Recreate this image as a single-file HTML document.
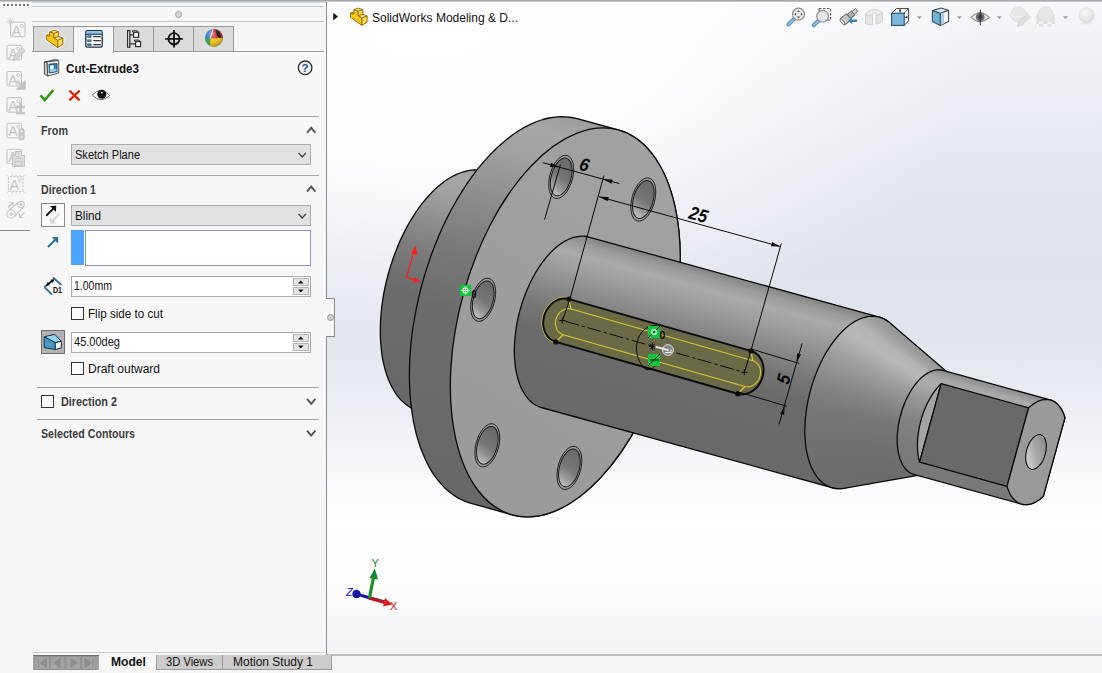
<!DOCTYPE html>
<html lang="en">
<head>
<meta charset="utf-8">
<title>Cut-Extrude3 - SolidWorks</title>
<style>
html,body{margin:0;padding:0;}
body{width:1102px;height:673px;overflow:hidden;background:#f7f7f7;position:relative;font-family:"Liberation Sans",sans-serif;font-size:12px;color:#111;}
.abs{position:absolute;}
.t{position:absolute;white-space:nowrap;line-height:14px;height:14px;}
.b{font-weight:bold;}
.hl{position:absolute;height:1px;background:#a9a9a9;}
.sec{color:#3c3c3c;font-weight:bold;}
.dd{position:absolute;left:71px;width:238px;height:19px;background:#e1e1e1;border:1px solid #adadad;}
.inp{position:absolute;left:71px;width:238px;height:19px;background:#fff;border:1px solid #ababab;}
.cb{position:absolute;width:11px;height:11px;border:1px solid #333;background:#fff;}
.spin{position:absolute;left:293px;width:14px;height:6px;background:#e4e4e4;border:1px solid #b4b4b4;}
.tab{position:absolute;top:26px;width:39px;height:24px;background:#dbdbdb;border:1px solid #9a9a9a;}
svg{position:absolute;left:0;top:0;}
</style>
</head>
<body>
<!-- viewport -->
<svg width="1102" height="673" viewBox="0 0 1102 673">
<defs>
<linearGradient id="bgv" x1="0" y1="0" x2="0" y2="1">
<stop offset="0" stop-color="#f6f7fa"/><stop offset="0.1" stop-color="#eef0f5"/><stop offset="0.25" stop-color="#e4e7ef"/><stop offset="0.4" stop-color="#dfe3ec"/><stop offset="0.5" stop-color="#e0e4ec"/><stop offset="0.6" stop-color="#e9ecf2"/><stop offset="0.72" stop-color="#f8f9fb"/><stop offset="0.8" stop-color="#ffffff"/><stop offset="0.9" stop-color="#fcfcfd"/><stop offset="1" stop-color="#f2f3f5"/>
</linearGradient>
<radialGradient id="bgr" cx="0" cy="0" r="1" gradientUnits="userSpaceOnUse" gradientTransform="translate(430 30) scale(560 330)">
<stop offset="0" stop-color="#fff" stop-opacity="1"/><stop offset="0.4" stop-color="#fff" stop-opacity="0.92"/><stop offset="1" stop-color="#fff" stop-opacity="0"/>
</radialGradient>
<linearGradient id="gB" gradientUnits="userSpaceOnUse" x1="485.0" y1="171.2" x2="418.9" y2="411.1"><stop offset="0.000" stop-color="#9c9c9c"/><stop offset="0.050" stop-color="#a6a6a6"/><stop offset="0.120" stop-color="#a2a2a2"/><stop offset="0.250" stop-color="#8e8e8e"/><stop offset="0.400" stop-color="#787878"/><stop offset="0.550" stop-color="#6c6c6c"/><stop offset="1.000" stop-color="#686868"/></linearGradient>
<linearGradient id="gF" gradientUnits="userSpaceOnUse" x1="577.3" y1="118.7" x2="471.3" y2="503.5"><stop offset="0.000" stop-color="#9c9c9c"/><stop offset="0.050" stop-color="#a6a6a6"/><stop offset="0.120" stop-color="#a2a2a2"/><stop offset="0.250" stop-color="#8e8e8e"/><stop offset="0.400" stop-color="#787878"/><stop offset="0.550" stop-color="#6c6c6c"/><stop offset="1.000" stop-color="#686868"/></linearGradient>
<linearGradient id="gFace" gradientUnits="userSpaceOnUse" x1="618.3" y1="130.0" x2="512.3" y2="514.8"><stop offset="0" stop-color="#a2a2a2"/><stop offset="1" stop-color="#9a9a9a"/></linearGradient>
<linearGradient id="gH" x1="0.6" y1="0" x2="0.4" y2="1"><stop offset="0" stop-color="#686868"/><stop offset="0.5" stop-color="#767676"/><stop offset="0.75" stop-color="#949494"/><stop offset="1" stop-color="#c4c4c4"/></linearGradient>
<linearGradient id="gS" gradientUnits="userSpaceOnUse" x1="588.8" y1="237.1" x2="541.8" y2="407.7"><stop offset="0.000" stop-color="#848484"/><stop offset="0.050" stop-color="#9c9c9c"/><stop offset="0.110" stop-color="#aaaaaa"/><stop offset="0.200" stop-color="#9e9e9e"/><stop offset="0.320" stop-color="#8a8a8a"/><stop offset="0.450" stop-color="#767676"/><stop offset="0.580" stop-color="#6b6b6b"/><stop offset="1.000" stop-color="#696969"/></linearGradient>
<linearGradient id="gC0" gradientUnits="userSpaceOnUse" x1="880.6" y1="318.2" x2="834.0" y2="487.5"><stop offset="0.000" stop-color="#989898"/><stop offset="0.060" stop-color="#b4b4b4"/><stop offset="0.120" stop-color="#b8b8b8"/><stop offset="0.250" stop-color="#a0a0a0"/><stop offset="0.420" stop-color="#888888"/><stop offset="0.600" stop-color="#767676"/><stop offset="1.000" stop-color="#6c6c6c"/></linearGradient>
<linearGradient id="gC1" gradientUnits="userSpaceOnUse" x1="883.2" y1="320.4" x2="837.4" y2="486.9"><stop offset="0.000" stop-color="#989898"/><stop offset="0.060" stop-color="#b4b4b4"/><stop offset="0.120" stop-color="#b8b8b8"/><stop offset="0.250" stop-color="#a0a0a0"/><stop offset="0.420" stop-color="#888888"/><stop offset="0.600" stop-color="#767676"/><stop offset="1.000" stop-color="#6c6c6c"/></linearGradient>
<linearGradient id="gC2" gradientUnits="userSpaceOnUse" x1="885.9" y1="322.6" x2="840.8" y2="486.3"><stop offset="0.000" stop-color="#989898"/><stop offset="0.060" stop-color="#b4b4b4"/><stop offset="0.120" stop-color="#b8b8b8"/><stop offset="0.250" stop-color="#a0a0a0"/><stop offset="0.420" stop-color="#888888"/><stop offset="0.600" stop-color="#767676"/><stop offset="1.000" stop-color="#6c6c6c"/></linearGradient>
<linearGradient id="gC3" gradientUnits="userSpaceOnUse" x1="888.5" y1="324.9" x2="844.2" y2="485.8"><stop offset="0.000" stop-color="#989898"/><stop offset="0.060" stop-color="#b4b4b4"/><stop offset="0.120" stop-color="#b8b8b8"/><stop offset="0.250" stop-color="#a0a0a0"/><stop offset="0.420" stop-color="#888888"/><stop offset="0.600" stop-color="#767676"/><stop offset="1.000" stop-color="#6c6c6c"/></linearGradient>
<linearGradient id="gC4" gradientUnits="userSpaceOnUse" x1="891.2" y1="327.1" x2="847.6" y2="485.2"><stop offset="0.000" stop-color="#989898"/><stop offset="0.060" stop-color="#b4b4b4"/><stop offset="0.120" stop-color="#b8b8b8"/><stop offset="0.250" stop-color="#a0a0a0"/><stop offset="0.420" stop-color="#888888"/><stop offset="0.600" stop-color="#767676"/><stop offset="1.000" stop-color="#6c6c6c"/></linearGradient>
<linearGradient id="gC5" gradientUnits="userSpaceOnUse" x1="893.8" y1="329.3" x2="851.0" y2="484.7"><stop offset="0.000" stop-color="#989898"/><stop offset="0.060" stop-color="#b4b4b4"/><stop offset="0.120" stop-color="#b8b8b8"/><stop offset="0.250" stop-color="#a0a0a0"/><stop offset="0.420" stop-color="#888888"/><stop offset="0.600" stop-color="#767676"/><stop offset="1.000" stop-color="#6c6c6c"/></linearGradient>
<linearGradient id="gC6" gradientUnits="userSpaceOnUse" x1="896.4" y1="331.5" x2="854.4" y2="484.1"><stop offset="0.000" stop-color="#989898"/><stop offset="0.060" stop-color="#b4b4b4"/><stop offset="0.120" stop-color="#b8b8b8"/><stop offset="0.250" stop-color="#a0a0a0"/><stop offset="0.420" stop-color="#888888"/><stop offset="0.600" stop-color="#767676"/><stop offset="1.000" stop-color="#6c6c6c"/></linearGradient>
<linearGradient id="gC7" gradientUnits="userSpaceOnUse" x1="899.1" y1="333.7" x2="857.8" y2="483.6"><stop offset="0.000" stop-color="#989898"/><stop offset="0.060" stop-color="#b4b4b4"/><stop offset="0.120" stop-color="#b8b8b8"/><stop offset="0.250" stop-color="#a0a0a0"/><stop offset="0.420" stop-color="#888888"/><stop offset="0.600" stop-color="#767676"/><stop offset="1.000" stop-color="#6c6c6c"/></linearGradient>
<linearGradient id="gC8" gradientUnits="userSpaceOnUse" x1="901.7" y1="335.9" x2="861.2" y2="483.0"><stop offset="0.000" stop-color="#989898"/><stop offset="0.060" stop-color="#b4b4b4"/><stop offset="0.120" stop-color="#b8b8b8"/><stop offset="0.250" stop-color="#a0a0a0"/><stop offset="0.420" stop-color="#888888"/><stop offset="0.600" stop-color="#767676"/><stop offset="1.000" stop-color="#6c6c6c"/></linearGradient>
<linearGradient id="gC9" gradientUnits="userSpaceOnUse" x1="904.4" y1="338.2" x2="864.6" y2="482.5"><stop offset="0.000" stop-color="#989898"/><stop offset="0.060" stop-color="#b4b4b4"/><stop offset="0.120" stop-color="#b8b8b8"/><stop offset="0.250" stop-color="#a0a0a0"/><stop offset="0.420" stop-color="#888888"/><stop offset="0.600" stop-color="#767676"/><stop offset="1.000" stop-color="#6c6c6c"/></linearGradient>
<linearGradient id="gC10" gradientUnits="userSpaceOnUse" x1="907.0" y1="340.4" x2="868.0" y2="481.9"><stop offset="0.000" stop-color="#989898"/><stop offset="0.060" stop-color="#b4b4b4"/><stop offset="0.120" stop-color="#b8b8b8"/><stop offset="0.250" stop-color="#a0a0a0"/><stop offset="0.420" stop-color="#888888"/><stop offset="0.600" stop-color="#767676"/><stop offset="1.000" stop-color="#6c6c6c"/></linearGradient>
<linearGradient id="gC11" gradientUnits="userSpaceOnUse" x1="909.6" y1="342.6" x2="871.4" y2="481.4"><stop offset="0.000" stop-color="#989898"/><stop offset="0.060" stop-color="#b4b4b4"/><stop offset="0.120" stop-color="#b8b8b8"/><stop offset="0.250" stop-color="#a0a0a0"/><stop offset="0.420" stop-color="#888888"/><stop offset="0.600" stop-color="#767676"/><stop offset="1.000" stop-color="#6c6c6c"/></linearGradient>
<linearGradient id="gC12" gradientUnits="userSpaceOnUse" x1="912.3" y1="344.8" x2="874.8" y2="480.8"><stop offset="0.000" stop-color="#989898"/><stop offset="0.060" stop-color="#b4b4b4"/><stop offset="0.120" stop-color="#b8b8b8"/><stop offset="0.250" stop-color="#a0a0a0"/><stop offset="0.420" stop-color="#888888"/><stop offset="0.600" stop-color="#767676"/><stop offset="1.000" stop-color="#6c6c6c"/></linearGradient>
<linearGradient id="gC13" gradientUnits="userSpaceOnUse" x1="914.9" y1="347.0" x2="878.2" y2="480.3"><stop offset="0.000" stop-color="#989898"/><stop offset="0.060" stop-color="#b4b4b4"/><stop offset="0.120" stop-color="#b8b8b8"/><stop offset="0.250" stop-color="#a0a0a0"/><stop offset="0.420" stop-color="#888888"/><stop offset="0.600" stop-color="#767676"/><stop offset="1.000" stop-color="#6c6c6c"/></linearGradient>
<linearGradient id="gC14" gradientUnits="userSpaceOnUse" x1="917.6" y1="349.3" x2="881.6" y2="479.7"><stop offset="0.000" stop-color="#989898"/><stop offset="0.060" stop-color="#b4b4b4"/><stop offset="0.120" stop-color="#b8b8b8"/><stop offset="0.250" stop-color="#a0a0a0"/><stop offset="0.420" stop-color="#888888"/><stop offset="0.600" stop-color="#767676"/><stop offset="1.000" stop-color="#6c6c6c"/></linearGradient>
<linearGradient id="gC15" gradientUnits="userSpaceOnUse" x1="920.2" y1="351.5" x2="885.0" y2="479.2"><stop offset="0.000" stop-color="#989898"/><stop offset="0.060" stop-color="#b4b4b4"/><stop offset="0.120" stop-color="#b8b8b8"/><stop offset="0.250" stop-color="#a0a0a0"/><stop offset="0.420" stop-color="#888888"/><stop offset="0.600" stop-color="#767676"/><stop offset="1.000" stop-color="#6c6c6c"/></linearGradient>
<linearGradient id="gC16" gradientUnits="userSpaceOnUse" x1="922.8" y1="353.7" x2="888.4" y2="478.6"><stop offset="0.000" stop-color="#989898"/><stop offset="0.060" stop-color="#b4b4b4"/><stop offset="0.120" stop-color="#b8b8b8"/><stop offset="0.250" stop-color="#a0a0a0"/><stop offset="0.420" stop-color="#888888"/><stop offset="0.600" stop-color="#767676"/><stop offset="1.000" stop-color="#6c6c6c"/></linearGradient>
<linearGradient id="gC17" gradientUnits="userSpaceOnUse" x1="925.5" y1="355.9" x2="891.8" y2="478.0"><stop offset="0.000" stop-color="#989898"/><stop offset="0.060" stop-color="#b4b4b4"/><stop offset="0.120" stop-color="#b8b8b8"/><stop offset="0.250" stop-color="#a0a0a0"/><stop offset="0.420" stop-color="#888888"/><stop offset="0.600" stop-color="#767676"/><stop offset="1.000" stop-color="#6c6c6c"/></linearGradient>
<linearGradient id="gC18" gradientUnits="userSpaceOnUse" x1="928.1" y1="358.1" x2="895.2" y2="477.5"><stop offset="0.000" stop-color="#989898"/><stop offset="0.060" stop-color="#b4b4b4"/><stop offset="0.120" stop-color="#b8b8b8"/><stop offset="0.250" stop-color="#a0a0a0"/><stop offset="0.420" stop-color="#888888"/><stop offset="0.600" stop-color="#767676"/><stop offset="1.000" stop-color="#6c6c6c"/></linearGradient>
<linearGradient id="gC19" gradientUnits="userSpaceOnUse" x1="930.7" y1="360.3" x2="898.6" y2="476.9"><stop offset="0.000" stop-color="#989898"/><stop offset="0.060" stop-color="#b4b4b4"/><stop offset="0.120" stop-color="#b8b8b8"/><stop offset="0.250" stop-color="#a0a0a0"/><stop offset="0.420" stop-color="#888888"/><stop offset="0.600" stop-color="#767676"/><stop offset="1.000" stop-color="#6c6c6c"/></linearGradient>
<linearGradient id="gC20" gradientUnits="userSpaceOnUse" x1="933.4" y1="362.6" x2="902.0" y2="476.4"><stop offset="0.000" stop-color="#989898"/><stop offset="0.060" stop-color="#b4b4b4"/><stop offset="0.120" stop-color="#b8b8b8"/><stop offset="0.250" stop-color="#a0a0a0"/><stop offset="0.420" stop-color="#888888"/><stop offset="0.600" stop-color="#767676"/><stop offset="1.000" stop-color="#6c6c6c"/></linearGradient>
<linearGradient id="gC21" gradientUnits="userSpaceOnUse" x1="936.0" y1="364.8" x2="905.4" y2="475.8"><stop offset="0.000" stop-color="#989898"/><stop offset="0.060" stop-color="#b4b4b4"/><stop offset="0.120" stop-color="#b8b8b8"/><stop offset="0.250" stop-color="#a0a0a0"/><stop offset="0.420" stop-color="#888888"/><stop offset="0.600" stop-color="#767676"/><stop offset="1.000" stop-color="#6c6c6c"/></linearGradient>
<linearGradient id="gC22" gradientUnits="userSpaceOnUse" x1="938.7" y1="367.0" x2="908.8" y2="475.3"><stop offset="0.000" stop-color="#989898"/><stop offset="0.060" stop-color="#b4b4b4"/><stop offset="0.120" stop-color="#b8b8b8"/><stop offset="0.250" stop-color="#a0a0a0"/><stop offset="0.420" stop-color="#888888"/><stop offset="0.600" stop-color="#767676"/><stop offset="1.000" stop-color="#6c6c6c"/></linearGradient>
<linearGradient id="gC23" gradientUnits="userSpaceOnUse" x1="941.3" y1="369.2" x2="912.2" y2="474.7"><stop offset="0.000" stop-color="#989898"/><stop offset="0.060" stop-color="#b4b4b4"/><stop offset="0.120" stop-color="#b8b8b8"/><stop offset="0.250" stop-color="#a0a0a0"/><stop offset="0.420" stop-color="#888888"/><stop offset="0.600" stop-color="#767676"/><stop offset="1.000" stop-color="#6c6c6c"/></linearGradient>
<linearGradient id="gM" gradientUnits="userSpaceOnUse" x1="942.6" y1="370.3" x2="913.9" y2="474.4"><stop offset="0.000" stop-color="#8c8c8c"/><stop offset="0.080" stop-color="#a8a8a8"/><stop offset="0.160" stop-color="#acacac"/><stop offset="0.300" stop-color="#989898"/><stop offset="0.500" stop-color="#848484"/><stop offset="0.700" stop-color="#7c7c7c"/><stop offset="1.000" stop-color="#787878"/></linearGradient>
<linearGradient id="gEH" x1="0.9" y1="0.1" x2="0.1" y2="0.9"><stop offset="0" stop-color="#8a8a8a"/><stop offset="0.5" stop-color="#a8a8a8"/><stop offset="1" stop-color="#d8d8d8"/></linearGradient>
</defs>
<rect x="327" y="2" width="775" height="653" fill="url(#bgv)"/>
<rect x="327" y="2" width="775" height="653" fill="url(#bgr)"/>
<path d="M380.3 332.0 L380.4 325.9 L380.6 319.7 L381.1 313.5 L381.7 307.2 L382.6 300.8 L383.6 294.4 L384.9 288.0 L386.3 281.6 L387.9 275.2 L389.7 268.9 L391.7 262.7 L393.8 256.5 L396.1 250.4 L398.5 244.4 L401.1 238.6 L403.9 232.9 L406.7 227.4 L409.7 222.0 L412.9 216.9 L416.1 211.9 L419.4 207.2 L422.8 202.7 L426.3 198.5 L429.9 194.5 L433.5 190.7 L437.2 187.3 L440.9 184.2 L444.7 181.3 L448.4 178.7 L452.2 176.5 L456.0 174.6 L459.8 173.0 L463.5 171.8 L467.2 170.8 L470.9 170.2 L474.5 170.0 L478.1 170.1 L481.6 170.5 L485.0 171.2 L557.4 191.2 L560.7 192.3 L563.9 193.7 L567.0 195.4 L570.0 197.5 L572.8 199.9 L575.5 202.6 L578.1 205.6 L580.5 208.9 L582.8 212.5 L584.9 216.3 L586.8 220.5 L588.6 224.8 L590.2 229.4 L591.6 234.3 L592.8 239.3 L593.8 244.6 L594.6 250.0 L595.3 255.6 L595.7 261.4 L595.9 267.3 L596.0 273.3 L595.8 279.5 L595.4 285.7 L594.9 292.0 L594.1 298.3 L593.1 304.7 L592.0 311.1 L590.7 317.5 L589.1 323.9 L587.4 330.2 L585.6 336.5 L583.5 342.7 L581.3 348.8 L578.9 354.9 L576.4 360.8 L573.8 366.5 L571.0 372.2 L568.0 377.6 L565.0 382.9 L561.8 387.9 L558.5 392.7 L555.1 397.4 L551.7 401.7 L548.2 405.9 L544.6 409.7 L540.9 413.3 L537.2 416.6 L533.5 419.6 L529.7 422.3 L525.9 424.7 L522.1 426.8 L518.4 428.5 L514.6 429.9 L510.9 431.0 L507.2 431.8 L503.5 432.2 L499.9 432.3 L496.4 432.1 L493.0 431.5 L417.2 410.6 L414.0 409.3 L410.8 407.8 L407.8 405.8 L404.9 403.6 L402.1 401.1 L399.4 398.2 L396.9 395.1 L394.6 391.6 L392.4 387.9 L390.4 383.9 L388.5 379.7 L386.9 375.2 L385.4 370.5 L384.1 365.5 L382.9 360.4 L382.0 355.0 L381.3 349.5 L380.8 343.8 L380.4 337.9 Z" fill="url(#gB)" stroke="#0a0a0a" stroke-width="1.3" stroke-linejoin="round" stroke-linecap="round"/>
<path d="M409.4 376.6 L409.5 366.8 L409.9 356.9 L410.7 346.9 L411.7 336.8 L413.1 326.5 L414.8 316.3 L416.8 306.0 L419.1 295.8 L421.6 285.6 L424.5 275.4 L427.7 265.4 L431.1 255.5 L434.8 245.7 L438.7 236.1 L442.8 226.8 L447.2 217.6 L451.8 208.8 L456.7 200.2 L461.7 191.9 L466.8 184.0 L472.2 176.4 L477.6 169.2 L483.2 162.4 L489.0 155.9 L494.8 150.0 L500.7 144.5 L506.7 139.4 L512.7 134.8 L518.7 130.7 L524.8 127.1 L530.9 124.1 L536.9 121.5 L542.9 119.5 L548.9 118.0 L554.8 117.1 L560.6 116.7 L566.3 116.8 L571.9 117.5 L577.3 118.7 L618.3 130.0 L623.6 131.7 L628.8 134.0 L633.7 136.8 L638.5 140.1 L643.1 144.0 L647.4 148.3 L651.6 153.1 L655.5 158.4 L659.1 164.1 L662.5 170.3 L665.6 176.9 L668.4 183.9 L670.9 191.3 L673.2 199.1 L675.1 207.2 L676.8 215.7 L678.1 224.4 L679.1 233.4 L679.8 242.6 L680.2 252.1 L680.2 261.8 L680.0 271.6 L679.4 281.6 L678.5 291.7 L677.3 301.9 L675.7 312.1 L673.9 322.4 L671.7 332.6 L669.3 342.9 L666.6 353.0 L663.6 363.1 L660.3 373.1 L656.7 382.9 L652.9 392.6 L648.9 402.1 L644.6 411.3 L640.1 420.3 L635.4 429.1 L630.5 437.5 L625.4 445.6 L620.2 453.4 L614.7 460.8 L609.2 467.8 L603.5 474.4 L597.8 480.6 L591.9 486.4 L586.0 491.6 L580.0 496.5 L573.9 500.8 L567.9 504.6 L561.8 508.0 L555.7 510.8 L549.7 513.1 L543.7 514.8 L537.8 516.0 L531.9 516.7 L526.2 516.9 L520.5 516.5 L515.0 515.5 L509.6 514.0 L468.6 502.7 L463.4 500.7 L458.4 498.2 L453.5 495.1 L448.8 491.5 L444.3 487.4 L440.1 482.9 L436.1 477.8 L432.3 472.3 L428.8 466.3 L425.6 459.9 L422.6 453.1 L419.9 445.9 L417.5 438.3 L415.4 430.4 L413.6 422.1 L412.2 413.5 L411.0 404.7 L410.1 395.5 L409.6 386.2 Z" fill="url(#gF)" stroke="#0a0a0a" stroke-width="1.3" stroke-linejoin="round" stroke-linecap="round"/>
<ellipse cx="565.3" cy="322.4" rx="105.8" ry="199.6" transform="rotate(15.4 565.3 322.4)" fill="url(#gFace)" stroke="#0a0a0a" stroke-width="1.3" stroke-linejoin="round" stroke-linecap="round"/>
<g transform="rotate(15.4 483.2 299.8)"><ellipse cx="483.2" cy="299.8" rx="11.4" ry="22.2" fill="none" stroke="#1a1a1a" stroke-width="0.9"/><ellipse cx="483.2" cy="299.8" rx="9.9" ry="19.4" fill="url(#gH)" stroke="#1a1a1a" stroke-width="1"/></g>
<g transform="rotate(15.4 643.3 199.5)"><ellipse cx="643.3" cy="199.5" rx="11.4" ry="22.2" fill="none" stroke="#1a1a1a" stroke-width="0.9"/><ellipse cx="643.3" cy="199.5" rx="9.9" ry="19.4" fill="url(#gH)" stroke="#1a1a1a" stroke-width="1"/></g>
<g transform="rotate(15.4 561.2 176.9)"><ellipse cx="561.2" cy="176.9" rx="11.4" ry="22.2" fill="none" stroke="#1a1a1a" stroke-width="0.9"/><ellipse cx="561.2" cy="176.9" rx="9.9" ry="19.4" fill="url(#gH)" stroke="#1a1a1a" stroke-width="1"/></g>
<g transform="rotate(15.4 487.3 445.3)"><ellipse cx="487.3" cy="445.3" rx="11.4" ry="22.2" fill="none" stroke="#1a1a1a" stroke-width="0.9"/><ellipse cx="487.3" cy="445.3" rx="9.9" ry="19.4" fill="url(#gH)" stroke="#1a1a1a" stroke-width="1"/></g>
<g transform="rotate(15.4 569.4 467.9)"><ellipse cx="569.4" cy="467.9" rx="11.4" ry="22.2" fill="none" stroke="#1a1a1a" stroke-width="0.9"/><ellipse cx="569.4" cy="467.9" rx="9.9" ry="19.4" fill="url(#gH)" stroke="#1a1a1a" stroke-width="1"/></g>
<path d="M514.3 351.4 L514.4 347.1 L514.6 342.7 L514.9 338.3 L515.4 333.8 L516.0 329.2 L516.7 324.7 L517.6 320.1 L518.6 315.6 L519.8 311.1 L521.0 306.6 L522.4 302.1 L524.0 297.7 L525.6 293.4 L527.3 289.2 L529.2 285.0 L531.1 281.0 L533.2 277.0 L535.3 273.2 L537.5 269.5 L539.8 266.0 L542.2 262.7 L544.6 259.5 L547.1 256.4 L549.6 253.6 L552.2 251.0 L554.8 248.5 L557.5 246.3 L560.1 244.2 L562.8 242.4 L565.5 240.8 L568.2 239.5 L570.9 238.3 L573.5 237.4 L576.2 236.8 L578.8 236.4 L581.4 236.2 L583.9 236.2 L586.4 236.5 L588.8 237.1 L879.3 317.1 L881.6 317.9 L883.9 318.9 L886.1 320.1 L888.2 321.6 L890.3 323.3 L892.2 325.2 L894.0 327.4 L895.8 329.7 L897.4 332.2 L898.9 335.0 L900.2 337.9 L901.5 341.0 L902.6 344.3 L903.6 347.8 L904.5 351.3 L905.2 355.1 L905.8 359.0 L906.2 362.9 L906.5 367.0 L906.7 371.2 L906.7 375.5 L906.6 379.9 L906.4 384.3 L906.0 388.8 L905.4 393.3 L904.7 397.8 L903.9 402.4 L903.0 406.9 L901.9 411.5 L900.7 416.0 L899.4 420.5 L897.9 424.9 L896.3 429.3 L894.6 433.5 L892.8 437.7 L890.9 441.8 L889.0 445.8 L886.9 449.7 L884.7 453.4 L882.4 457.0 L880.1 460.5 L877.7 463.8 L875.2 466.9 L872.7 469.8 L870.2 472.6 L867.6 475.1 L864.9 477.5 L862.3 479.6 L859.6 481.5 L856.9 483.2 L854.2 484.7 L851.5 485.9 L848.9 486.9 L846.2 487.7 L843.6 488.3 L841.0 488.6 L838.4 488.6 L835.9 488.5 L833.5 488.0 L543.0 408.0 L540.6 407.4 L538.3 406.5 L536.1 405.3 L533.9 404.0 L531.8 402.4 L529.8 400.6 L528.0 398.6 L526.2 396.3 L524.5 393.9 L523.0 391.2 L521.5 388.4 L520.2 385.4 L519.0 382.2 L517.9 378.8 L517.0 375.3 L516.2 371.6 L515.6 367.8 L515.0 363.9 L514.7 359.8 L514.4 355.7 Z" fill="url(#gS)" stroke="#0a0a0a" stroke-width="1.3" stroke-linejoin="round" stroke-linecap="round"/>
<path d="M804.9 434.3 L805.0 423.6 L806.0 412.5 L807.9 401.2 L810.6 390.0 L814.0 378.9 L818.2 368.3 L823.0 358.3 L828.4 349.0 L834.2 340.6 L840.4 333.3 L846.9 327.1 L853.5 322.3 L860.2 318.8 L866.8 316.8 L873.2 316.2 L879.3 317.1 L885.0 319.4 L890.2 323.2 L892.6 325.3 L897.2 330.4 L901.1 336.7 L904.2 344.1 L906.6 352.6 L908.2 361.9 L908.9 371.9 L908.8 382.4 L907.8 393.4 L905.9 404.4 L903.3 415.5 L899.9 426.3 L895.8 436.8 L891.1 446.7 L885.8 455.8 L880.0 464.1 L873.9 471.3 L867.5 477.3 L861.0 482.1 L854.5 485.5 L848.0 487.5 L844.8 488.1 L838.4 488.6 L832.3 487.7 L826.6 485.4 L821.4 481.6 L816.8 476.5 L812.8 470.1 L809.6 462.5 L807.2 453.9 L805.6 444.5 Z" fill="url(#gC0)"/>
<path d="M808.7 434.6 L808.9 424.0 L809.8 413.1 L811.7 402.1 L814.3 391.0 L817.7 380.1 L821.8 369.7 L826.5 359.8 L831.8 350.7 L837.6 342.4 L843.7 335.2 L850.1 329.2 L856.6 324.4 L863.1 321.0 L869.6 319.0 L875.9 318.4 L881.9 319.3 L887.5 321.6 L892.6 325.3 L895.1 327.5 L899.6 332.4 L903.4 338.6 L906.5 345.9 L908.8 354.2 L910.4 363.4 L911.1 373.2 L910.9 383.6 L910.0 394.4 L908.2 405.2 L905.6 416.1 L902.2 426.8 L898.2 437.1 L893.5 446.8 L888.3 455.8 L882.7 463.9 L876.7 471.0 L870.4 476.9 L864.0 481.6 L857.6 485.0 L851.2 486.9 L848.0 487.5 L841.7 488.1 L835.7 487.2 L830.1 484.9 L825.0 481.1 L820.4 476.1 L816.5 469.8 L813.4 462.4 L811.0 453.9 L809.4 444.6 Z" fill="url(#gC1)"/>
<path d="M812.6 434.9 L812.7 424.5 L813.7 413.8 L815.5 402.9 L818.1 392.0 L821.4 381.4 L825.4 371.1 L830.1 361.4 L835.3 352.4 L841.0 344.3 L847.0 337.2 L853.2 331.2 L859.6 326.6 L866.1 323.2 L872.5 321.2 L878.7 320.7 L884.6 321.5 L890.1 323.8 L895.1 327.5 L897.6 329.6 L902.0 334.5 L905.7 340.5 L908.8 347.7 L911.1 355.9 L912.6 364.9 L913.3 374.6 L913.1 384.8 L912.2 395.3 L910.4 406.1 L907.9 416.8 L904.6 427.2 L900.6 437.4 L896.0 446.9 L890.9 455.8 L885.4 463.7 L879.5 470.7 L873.3 476.5 L867.0 481.1 L860.7 484.4 L854.4 486.4 L851.2 486.9 L845.0 487.5 L839.1 486.6 L833.6 484.3 L828.5 480.7 L824.1 475.7 L820.3 469.5 L817.1 462.2 L814.8 453.9 L813.3 444.8 Z" fill="url(#gC2)"/>
<path d="M816.4 435.2 L816.5 425.0 L817.5 414.5 L819.3 403.8 L821.8 393.1 L825.1 382.6 L829.1 372.5 L833.7 362.9 L838.8 354.1 L844.3 346.1 L850.2 339.1 L856.4 333.3 L862.7 328.7 L869.0 325.4 L875.3 323.4 L881.4 322.9 L887.2 323.7 L892.6 326.0 L897.6 329.6 L900.0 331.7 L904.3 336.5 L908.0 342.5 L911.0 349.5 L913.3 357.6 L914.8 366.4 L915.5 375.9 L915.3 386.0 L914.4 396.3 L912.7 406.9 L910.1 417.4 L906.9 427.7 L903.0 437.6 L898.5 447.0 L893.5 455.7 L888.0 463.5 L882.2 470.4 L876.2 476.1 L870.0 480.7 L863.7 483.9 L857.6 485.8 L854.4 486.4 L848.3 486.9 L842.5 486.1 L837.1 483.8 L832.1 480.2 L827.7 475.4 L824.0 469.3 L820.9 462.1 L818.6 453.9 L817.1 444.9 Z" fill="url(#gC3)"/>
<path d="M820.3 435.5 L820.4 425.5 L821.3 415.1 L823.1 404.6 L825.6 394.1 L828.8 383.8 L832.7 373.8 L837.2 364.4 L842.2 355.8 L847.7 347.9 L853.5 341.1 L859.6 335.4 L865.8 330.8 L872.0 327.6 L878.1 325.7 L884.1 325.1 L889.8 326.0 L895.2 328.2 L900.0 331.7 L902.5 333.8 L906.7 338.5 L910.4 344.4 L913.3 351.3 L915.5 359.2 L917.0 367.9 L917.7 377.3 L917.5 387.1 L916.6 397.3 L914.9 407.7 L912.4 418.0 L909.3 428.2 L905.4 437.9 L901.0 447.1 L896.1 455.7 L890.7 463.4 L885.0 470.1 L879.0 475.7 L873.0 480.2 L866.8 483.4 L860.8 485.3 L857.6 485.8 L851.6 486.4 L845.9 485.5 L840.6 483.3 L835.7 479.8 L831.4 475.0 L827.7 469.0 L824.7 461.9 L822.4 453.9 L820.9 445.1 Z" fill="url(#gC4)"/>
<path d="M824.1 435.9 L824.2 426.0 L825.2 415.8 L826.9 405.5 L829.3 395.1 L832.5 385.0 L836.3 375.2 L840.8 366.0 L845.7 357.5 L851.1 349.8 L856.8 343.0 L862.7 337.4 L868.8 333.0 L874.9 329.8 L881.0 327.9 L886.9 327.4 L892.5 328.2 L897.7 330.3 L902.5 333.8 L905.0 335.9 L909.1 340.6 L912.7 346.3 L915.6 353.2 L917.8 360.9 L919.2 369.4 L919.9 378.6 L919.7 388.3 L918.8 398.3 L917.1 408.5 L914.7 418.6 L911.6 428.6 L907.8 438.2 L903.5 447.3 L898.6 455.6 L893.4 463.2 L887.8 469.8 L881.9 475.3 L875.9 479.7 L869.9 482.9 L864.0 484.7 L860.8 485.3 L854.9 485.8 L849.3 485.0 L844.1 482.8 L839.3 479.3 L835.0 474.6 L831.4 468.7 L828.5 461.8 L826.2 453.9 L824.8 445.2 Z" fill="url(#gC5)"/>
<path d="M828.0 436.2 L828.1 426.5 L829.0 416.5 L830.7 406.3 L833.1 396.2 L836.2 386.2 L840.0 376.6 L844.3 367.5 L849.2 359.2 L854.4 351.6 L860.0 345.0 L865.9 339.5 L871.9 335.1 L877.9 332.0 L883.8 330.1 L889.6 329.6 L895.1 330.4 L900.3 332.5 L905.0 335.9 L907.4 338.0 L911.5 342.6 L915.0 348.3 L917.9 355.0 L920.0 362.6 L921.4 371.0 L922.1 380.0 L921.9 389.5 L921.0 399.3 L919.4 409.3 L917.0 419.3 L913.9 429.1 L910.2 438.5 L906.0 447.4 L901.2 455.6 L896.0 463.0 L890.5 469.5 L884.8 475.0 L878.9 479.2 L873.0 482.3 L867.2 484.1 L864.0 484.7 L858.2 485.2 L852.7 484.4 L847.5 482.3 L842.9 478.9 L838.7 474.2 L835.1 468.5 L832.2 461.7 L830.0 453.9 L828.6 445.4 Z" fill="url(#gC6)"/>
<path d="M831.8 436.5 L831.9 427.0 L832.8 417.1 L834.5 407.2 L836.8 397.2 L839.9 387.4 L843.6 378.0 L847.9 369.1 L852.6 360.9 L857.8 353.4 L863.3 347.0 L869.1 341.5 L874.9 337.2 L880.8 334.1 L886.7 332.3 L892.3 331.8 L897.8 332.6 L902.8 334.7 L907.4 338.0 L909.9 340.2 L913.9 344.6 L917.3 350.2 L920.1 356.8 L922.2 364.2 L923.6 372.5 L924.2 381.3 L924.1 390.7 L923.2 400.3 L921.6 410.1 L919.3 419.9 L916.3 429.5 L912.7 438.8 L908.5 447.5 L903.8 455.6 L898.7 462.9 L893.3 469.2 L887.7 474.6 L881.9 478.8 L876.1 481.8 L870.4 483.6 L867.2 484.1 L861.5 484.7 L856.1 483.9 L851.0 481.8 L846.4 478.4 L842.3 473.9 L838.8 468.2 L836.0 461.5 L833.9 453.9 L832.5 445.5 Z" fill="url(#gC7)"/>
<path d="M835.7 436.8 L835.8 427.5 L836.7 417.8 L838.3 408.0 L840.6 398.2 L843.6 388.6 L847.2 379.4 L851.4 370.6 L856.1 362.6 L861.2 355.3 L866.6 348.9 L872.2 343.6 L878.0 339.4 L883.8 336.3 L889.5 334.6 L895.1 334.1 L900.4 334.8 L905.4 336.9 L909.9 340.2 L912.3 342.3 L916.3 346.7 L919.7 352.1 L922.4 358.6 L924.5 365.9 L925.8 374.0 L926.4 382.7 L926.3 391.8 L925.5 401.3 L923.9 410.9 L921.6 420.5 L918.6 430.0 L915.1 439.0 L911.0 447.6 L906.4 455.5 L901.4 462.7 L896.1 468.9 L890.6 474.2 L884.9 478.3 L879.2 481.3 L873.6 483.0 L870.4 483.6 L864.8 484.1 L859.5 483.3 L854.5 481.3 L850.0 478.0 L846.0 473.5 L842.6 467.9 L839.8 461.4 L837.7 453.9 L836.3 445.7 Z" fill="url(#gC8)"/>
<path d="M839.5 437.1 L839.6 428.0 L840.5 418.5 L842.1 408.9 L844.4 399.3 L847.3 389.8 L850.9 380.8 L855.0 372.2 L859.6 364.3 L864.6 357.1 L869.9 350.9 L875.4 345.6 L881.0 341.5 L886.7 338.5 L892.4 336.8 L897.8 336.3 L903.0 337.1 L907.9 339.1 L912.3 342.3 L914.8 344.4 L918.7 348.7 L922.0 354.1 L924.7 360.4 L926.7 367.6 L928.0 375.5 L928.6 384.0 L928.5 393.0 L927.7 402.3 L926.1 411.7 L923.9 421.2 L921.0 430.4 L917.5 439.3 L913.5 447.7 L908.9 455.5 L904.1 462.5 L898.9 468.6 L893.4 473.8 L887.9 477.8 L882.3 480.7 L876.8 482.5 L873.6 483.0 L868.1 483.5 L862.9 482.8 L858.0 480.7 L853.6 477.5 L849.7 473.1 L846.3 467.7 L843.5 461.2 L841.5 453.9 L840.1 445.8 Z" fill="url(#gC9)"/>
<path d="M843.3 437.4 L843.5 428.4 L844.3 419.2 L845.9 409.7 L848.1 400.3 L851.0 391.1 L854.5 382.2 L858.5 373.7 L863.0 366.0 L867.9 359.0 L873.1 352.8 L878.5 347.7 L884.1 343.6 L889.7 340.7 L895.2 339.0 L900.6 338.5 L905.7 339.3 L910.5 341.2 L914.8 344.4 L917.3 346.5 L921.1 350.7 L924.3 356.0 L926.9 362.2 L928.9 369.2 L930.2 377.0 L930.8 385.4 L930.7 394.2 L929.9 403.3 L928.4 412.6 L926.2 421.8 L923.3 430.9 L919.9 439.6 L915.9 447.8 L911.5 455.5 L906.7 462.3 L901.6 468.4 L896.3 473.4 L890.9 477.4 L885.4 480.2 L880.0 481.9 L876.8 482.5 L871.4 482.9 L866.3 482.2 L861.5 480.2 L857.2 477.1 L853.3 472.8 L850.0 467.4 L847.3 461.1 L845.3 453.9 L844.0 446.0 Z" fill="url(#gC10)"/>
<path d="M847.2 437.7 L847.3 428.9 L848.1 419.8 L849.7 410.6 L851.9 401.3 L854.7 392.3 L858.1 383.5 L862.1 375.3 L866.5 367.7 L871.3 360.8 L876.4 354.8 L881.7 349.7 L887.2 345.8 L892.6 342.9 L898.0 341.2 L903.3 340.8 L908.3 341.5 L913.0 343.4 L917.3 346.5 L919.7 348.6 L923.4 352.8 L926.6 357.9 L929.2 364.0 L931.2 370.9 L932.4 378.5 L933.0 386.7 L932.9 395.4 L932.1 404.3 L930.6 413.4 L928.4 422.4 L925.7 431.3 L922.3 439.9 L918.4 447.9 L914.1 455.4 L909.4 462.2 L904.4 468.1 L899.2 473.0 L893.8 476.9 L888.5 479.7 L883.2 481.3 L880.0 481.9 L874.7 482.4 L869.7 481.6 L865.0 479.7 L860.8 476.6 L857.0 472.4 L853.7 467.1 L851.1 460.9 L849.1 453.9 L847.8 446.1 Z" fill="url(#gC11)"/>
<path d="M851.0 438.1 L851.2 429.4 L852.0 420.5 L853.5 411.4 L855.6 402.4 L858.4 393.5 L861.8 384.9 L865.6 376.8 L870.0 369.4 L874.7 362.6 L879.7 356.7 L884.9 351.8 L890.2 347.9 L895.6 345.1 L900.9 343.4 L906.0 343.0 L911.0 343.7 L915.5 345.6 L919.7 348.6 L922.2 350.8 L925.8 354.8 L928.9 359.9 L931.5 365.8 L933.4 372.6 L934.6 380.1 L935.2 388.1 L935.1 396.6 L934.3 405.3 L932.8 414.2 L930.7 423.1 L928.0 431.8 L924.7 440.1 L920.9 448.1 L916.7 455.4 L912.1 462.0 L907.2 467.8 L902.1 472.6 L896.8 476.4 L891.6 479.2 L886.4 480.8 L883.2 481.3 L878.0 481.8 L873.1 481.1 L868.5 479.2 L864.3 476.2 L860.6 472.0 L857.4 466.9 L854.9 460.8 L852.9 453.9 L851.6 446.3 Z" fill="url(#gC12)"/>
<path d="M854.9 438.4 L855.0 429.9 L855.8 421.2 L857.3 412.3 L859.4 403.4 L862.1 394.7 L865.4 386.3 L869.2 378.4 L873.4 371.1 L878.0 364.5 L882.9 358.7 L888.0 353.9 L893.3 350.0 L898.5 347.3 L903.7 345.7 L908.8 345.2 L913.6 345.9 L918.1 347.8 L922.2 350.8 L924.7 352.9 L928.2 356.8 L931.3 361.8 L933.7 367.6 L935.6 374.3 L936.8 381.6 L937.4 389.4 L937.3 397.7 L936.5 406.3 L935.1 415.0 L933.0 423.7 L930.3 432.2 L927.1 440.4 L923.4 448.2 L919.3 455.4 L914.7 461.8 L909.9 467.5 L904.9 472.2 L899.8 476.0 L894.7 478.6 L889.6 480.2 L886.4 480.8 L881.3 481.2 L876.5 480.5 L872.0 478.7 L867.9 475.7 L864.3 471.7 L861.2 466.6 L858.6 460.6 L856.7 453.9 L855.5 446.4 Z" fill="url(#gC13)"/>
<path d="M858.7 438.7 L858.8 430.4 L859.6 421.8 L861.1 413.1 L863.1 404.4 L865.8 395.9 L869.0 387.7 L872.7 379.9 L876.9 372.8 L881.4 366.3 L886.2 360.6 L891.2 355.9 L896.3 352.2 L901.5 349.5 L906.6 347.9 L911.5 347.4 L916.2 348.1 L920.6 350.0 L924.7 352.9 L927.1 355.0 L930.6 358.9 L933.6 363.7 L936.0 369.4 L937.8 375.9 L939.1 383.1 L939.6 390.8 L939.5 398.9 L938.7 407.3 L937.3 415.8 L935.3 424.3 L932.7 432.7 L929.5 440.7 L925.9 448.3 L921.8 455.3 L917.4 461.7 L912.7 467.2 L907.8 471.8 L902.8 475.5 L897.8 478.1 L892.8 479.7 L889.6 480.2 L884.6 480.7 L879.9 480.0 L875.5 478.2 L871.5 475.2 L867.9 471.3 L864.9 466.3 L862.4 460.5 L860.5 453.9 L859.3 446.6 Z" fill="url(#gC14)"/>
<path d="M862.6 439.0 L862.7 430.9 L863.5 422.5 L864.9 414.0 L866.9 405.5 L869.5 397.1 L872.7 389.1 L876.3 381.5 L880.4 374.5 L884.8 368.1 L889.5 362.6 L894.4 358.0 L899.4 354.3 L904.4 351.7 L909.4 350.1 L914.3 349.7 L918.9 350.4 L923.2 352.1 L927.1 355.0 L929.6 357.1 L933.0 360.9 L935.9 365.6 L938.3 371.2 L940.1 377.6 L941.3 384.6 L941.8 392.1 L941.7 400.1 L940.9 408.3 L939.6 416.6 L937.6 424.9 L935.0 433.1 L931.9 441.0 L928.4 448.4 L924.4 455.3 L920.1 461.5 L915.5 466.9 L910.7 471.4 L905.8 475.0 L900.9 477.6 L896.0 479.1 L892.8 479.7 L887.9 480.1 L883.3 479.4 L879.0 477.6 L875.1 474.8 L871.6 470.9 L868.6 466.1 L866.2 460.4 L864.3 453.9 L863.1 446.7 Z" fill="url(#gC15)"/>
<path d="M866.4 439.3 L866.5 431.4 L867.3 423.2 L868.7 414.8 L870.6 406.5 L873.2 398.3 L876.3 390.5 L879.9 383.0 L883.8 376.2 L888.2 370.0 L892.7 364.6 L897.5 360.0 L902.4 356.4 L907.4 353.9 L912.3 352.3 L917.0 351.9 L921.5 352.6 L925.7 354.3 L929.6 357.1 L932.0 359.2 L935.4 362.9 L938.2 367.6 L940.6 373.0 L942.3 379.3 L943.5 386.1 L944.0 393.5 L943.9 401.3 L943.2 409.3 L941.8 417.4 L939.9 425.6 L937.4 433.6 L934.4 441.3 L930.9 448.5 L927.0 455.2 L922.7 461.3 L918.3 466.6 L913.6 471.0 L908.8 474.6 L903.9 477.1 L899.2 478.5 L896.0 479.1 L891.2 479.5 L886.7 478.9 L882.5 477.1 L878.7 474.3 L875.2 470.5 L872.3 465.8 L869.9 460.2 L868.1 453.9 L867.0 446.9 Z" fill="url(#gC16)"/>
<path d="M870.3 439.6 L870.4 431.9 L871.1 423.8 L872.5 415.7 L874.4 407.5 L876.9 399.6 L879.9 391.9 L883.4 384.6 L887.3 377.9 L891.5 371.8 L896.0 366.5 L900.7 362.1 L905.5 358.6 L910.3 356.0 L915.1 354.6 L919.7 354.1 L924.1 354.8 L928.3 356.5 L932.0 359.2 L934.5 361.4 L937.8 365.0 L940.6 369.5 L942.8 374.9 L944.5 380.9 L945.7 387.6 L946.2 394.8 L946.1 402.4 L945.4 410.3 L944.1 418.2 L942.2 426.2 L939.7 434.0 L936.8 441.5 L933.4 448.6 L929.6 455.2 L925.4 461.1 L921.0 466.3 L916.4 470.7 L911.8 474.1 L907.0 476.5 L902.4 478.0 L899.2 478.5 L894.5 479.0 L890.1 478.3 L886.0 476.6 L882.2 473.9 L878.9 470.2 L876.0 465.5 L873.7 460.1 L872.0 453.9 L870.8 447.0 Z" fill="url(#gC17)"/>
<path d="M874.1 439.9 L874.2 432.4 L874.9 424.5 L876.3 416.5 L878.2 408.6 L880.6 400.8 L883.6 393.2 L887.0 386.1 L890.8 379.6 L894.9 373.6 L899.3 368.5 L903.9 364.1 L908.6 360.7 L913.3 358.2 L917.9 356.8 L922.5 356.4 L926.8 357.0 L930.8 358.7 L934.5 361.4 L937.0 363.5 L940.2 367.0 L942.9 371.4 L945.1 376.7 L946.8 382.6 L947.9 389.1 L948.4 396.2 L948.3 403.6 L947.6 411.3 L946.3 419.1 L944.4 426.8 L942.1 434.5 L939.2 441.8 L935.8 448.8 L932.1 455.2 L928.1 461.0 L923.8 466.0 L919.3 470.3 L914.7 473.6 L910.1 476.0 L905.6 477.4 L902.4 478.0 L897.8 478.4 L893.5 477.8 L889.5 476.1 L885.8 473.4 L882.5 469.8 L879.8 465.3 L877.5 459.9 L875.8 453.9 L874.6 447.2 Z" fill="url(#gC18)"/>
<path d="M878.0 440.3 L878.1 432.8 L878.8 425.2 L880.1 417.4 L881.9 409.6 L884.3 402.0 L887.2 394.6 L890.5 387.7 L894.2 381.3 L898.3 375.5 L902.6 370.4 L907.0 366.2 L911.6 362.8 L916.2 360.4 L920.8 359.0 L925.2 358.6 L929.4 359.2 L933.4 360.9 L937.0 363.5 L939.4 365.6 L942.5 369.1 L945.2 373.4 L947.4 378.5 L949.0 384.3 L950.1 390.7 L950.6 397.5 L950.5 404.8 L949.8 412.3 L948.5 419.9 L946.7 427.5 L944.4 434.9 L941.6 442.1 L938.3 448.9 L934.7 455.1 L930.8 460.8 L926.6 465.7 L922.2 469.9 L917.7 473.1 L913.2 475.5 L908.8 476.9 L905.6 477.4 L901.1 477.8 L896.9 477.2 L893.0 475.6 L889.4 473.0 L886.2 469.4 L883.5 465.0 L881.3 459.8 L879.6 453.8 L878.5 447.3 Z" fill="url(#gC19)"/>
<path d="M881.8 440.6 L881.9 433.3 L882.6 425.8 L883.9 418.2 L885.7 410.6 L888.0 403.2 L890.8 396.0 L894.1 389.2 L897.7 383.0 L901.6 377.3 L905.8 372.4 L910.2 368.2 L914.7 365.0 L919.2 362.6 L923.6 361.2 L927.9 360.8 L932.1 361.4 L935.9 363.0 L939.4 365.6 L941.9 367.7 L944.9 371.1 L947.5 375.3 L949.6 380.3 L951.2 385.9 L952.3 392.2 L952.8 398.9 L952.7 406.0 L952.0 413.3 L950.8 420.7 L949.0 428.1 L946.7 435.4 L944.0 442.4 L940.8 449.0 L937.3 455.1 L933.4 460.6 L929.3 465.4 L925.1 469.5 L920.7 472.7 L916.3 475.0 L912.0 476.3 L908.8 476.9 L904.5 477.3 L900.3 476.7 L896.5 475.1 L893.0 472.5 L889.9 469.1 L887.2 464.7 L885.0 459.6 L883.4 453.8 L882.3 447.4 Z" fill="url(#gC20)"/>
<path d="M885.7 440.9 L885.8 433.8 L886.4 426.5 L887.7 419.1 L889.4 411.7 L891.7 404.4 L894.4 397.4 L897.6 390.8 L901.2 384.7 L905.0 379.2 L909.1 374.3 L913.4 370.3 L917.7 367.1 L922.1 364.8 L926.5 363.5 L930.7 363.1 L934.7 363.7 L938.5 365.2 L941.9 367.7 L944.4 369.8 L947.3 373.1 L949.9 377.2 L951.9 382.1 L953.5 387.6 L954.5 393.7 L955.0 400.2 L954.9 407.1 L954.2 414.3 L953.0 421.5 L951.3 428.7 L949.1 435.8 L946.4 442.6 L943.3 449.1 L939.9 455.1 L936.1 460.4 L932.1 465.2 L927.9 469.1 L923.7 472.2 L919.4 474.4 L915.2 475.8 L912.0 476.3 L907.8 476.7 L903.7 476.1 L900.0 474.6 L896.5 472.1 L893.5 468.7 L890.9 464.5 L888.8 459.5 L887.2 453.8 L886.2 447.6 Z" fill="url(#gC21)"/>
<path d="M889.5 441.2 L889.6 434.3 L890.3 427.2 L891.5 419.9 L893.2 412.7 L895.4 405.6 L898.1 398.8 L901.2 392.3 L904.6 386.4 L908.4 381.0 L912.4 376.3 L916.5 372.3 L920.8 369.2 L925.1 367.0 L929.3 365.7 L933.4 365.3 L937.3 365.9 L941.0 367.4 L944.4 369.8 L946.8 371.9 L949.7 375.2 L952.2 379.2 L954.2 383.9 L955.7 389.3 L956.7 395.2 L957.2 401.6 L957.1 408.3 L956.4 415.3 L955.3 422.3 L953.6 429.4 L951.4 436.3 L948.8 442.9 L945.8 449.2 L942.4 455.0 L938.8 460.3 L934.9 464.9 L930.8 468.7 L926.7 471.7 L922.5 473.9 L918.4 475.2 L915.2 475.8 L911.1 476.1 L907.1 475.6 L903.5 474.0 L900.1 471.6 L897.2 468.3 L894.6 464.2 L892.6 459.3 L891.0 453.8 L890.0 447.7 Z" fill="url(#gC22)"/>
<path d="M893.4 441.5 L893.5 434.8 L894.1 427.8 L895.3 420.8 L896.9 413.7 L899.1 406.8 L901.7 400.2 L904.7 393.9 L908.1 388.1 L911.8 382.8 L915.6 378.2 L919.7 374.4 L923.8 371.4 L928.0 369.2 L932.1 367.9 L936.2 367.5 L940.0 368.1 L943.6 369.6 L946.8 371.9 L949.3 374.1 L952.1 377.2 L954.5 381.1 L956.5 385.7 L957.9 390.9 L958.9 396.7 L959.3 402.9 L959.3 409.5 L958.6 416.2 L957.5 423.1 L955.9 430.0 L953.8 436.7 L951.2 443.2 L948.3 449.3 L945.0 455.0 L941.4 460.1 L937.7 464.6 L933.7 468.3 L929.7 471.3 L925.6 473.4 L921.6 474.6 L918.4 475.2 L914.4 475.6 L910.5 475.0 L907.0 473.5 L903.7 471.2 L900.8 467.9 L898.3 463.9 L896.3 459.2 L894.8 453.8 L893.8 447.9 Z" fill="url(#gC23)"/>
<path d="M804.8 431.4 L804.9 427.1 L805.1 422.7 L805.4 418.3 L805.9 413.8 L806.5 409.3 L807.2 404.7 L808.1 400.2 L809.1 395.6 L810.3 391.1 L811.5 386.6 L812.9 382.1 L814.4 377.7 L816.1 373.4 L817.8 369.2 L819.7 365.0 L821.6 361.0 L823.6 357.0 L825.8 353.2 L828.0 349.6 L830.3 346.0 L832.7 342.7 L835.1 339.5 L837.6 336.5 L840.1 333.6 L842.7 331.0 L845.3 328.5 L847.9 326.3 L850.6 324.2 L853.3 322.4 L856.0 320.8 L858.7 319.5 L861.4 318.4 L864.0 317.5 L866.7 316.8 L869.3 316.4 L871.9 316.2 L874.4 316.3 L876.9 316.6 L879.3 317.1 L881.6 317.9 L883.9 318.9 L886.1 320.1 L888.2 321.6 L890.3 323.3 L949.3 374.1 L950.5 375.3 L951.6 376.6 L952.7 378.0 L953.7 379.6 L954.6 381.2 L955.4 383.0 L956.2 384.9 L956.9 386.9 L957.5 389.0 L958.0 391.2 L958.4 393.5 L958.8 395.9 L959.1 398.3 L959.3 400.8 L959.4 403.4 L959.4 406.0 L959.3 408.6 L959.1 411.3 L958.9 414.1 L958.6 416.8 L958.2 419.6 L957.7 422.4 L957.1 425.1 L956.4 427.9 L955.7 430.7 L954.9 433.4 L954.0 436.1 L953.0 438.8 L952.0 441.4 L950.9 443.9 L949.7 446.4 L948.5 448.9 L947.2 451.2 L945.9 453.5 L944.5 455.7 L943.1 457.8 L941.7 459.8 L940.2 461.7 L938.6 463.5 L937.1 465.2 L935.5 466.7 L933.9 468.2 L932.2 469.5 L930.6 470.6 L929.0 471.7 L927.3 472.6 L925.7 473.3 L924.1 474.0 L922.4 474.4 L920.8 474.8 L843.6 488.3 L841.0 488.6 L838.4 488.6 L835.9 488.5 L833.5 488.0 L831.1 487.4 L828.8 486.5 L826.5 485.4 L824.4 484.0 L822.3 482.4 L820.3 480.6 L818.4 478.6 L816.7 476.3 L815.0 473.9 L813.4 471.2 L812.0 468.4 L810.7 465.4 L809.5 462.2 L808.4 458.8 L807.5 455.3 L806.7 451.6 L806.0 447.8 L805.5 443.9 L805.2 439.8 L804.9 435.7 Z" fill="none" stroke="#0a0a0a" stroke-width="1.3" stroke-linejoin="round" stroke-linecap="round"/>
<path d="M897.2 440.1 L897.2 437.5 L897.3 434.8 L897.5 432.1 L897.8 429.3 L898.2 426.6 L898.6 423.8 L899.2 421.0 L899.8 418.2 L900.5 415.5 L901.3 412.7 L902.1 410.0 L903.1 407.3 L904.0 404.7 L905.1 402.1 L906.2 399.6 L907.4 397.1 L908.7 394.7 L910.0 392.4 L911.3 390.1 L912.7 388.0 L914.2 385.9 L915.6 384.0 L917.2 382.1 L918.7 380.4 L920.3 378.8 L921.9 377.3 L923.5 375.9 L925.1 374.7 L926.8 373.6 L928.4 372.6 L930.0 371.8 L931.7 371.1 L933.3 370.5 L934.9 370.1 L936.5 369.9 L938.1 369.8 L939.6 369.8 L941.1 370.0 L942.6 370.3 L962.9 375.9 L1051.0 400.2 L1052.3 400.7 L1053.6 401.3 L1054.9 402.1 L1056.0 402.9 L1057.2 403.9 L1058.3 405.1 L1059.3 406.3 L1060.3 407.6 L1061.3 409.1 L1062.1 410.6 L1062.9 412.3 L1063.7 414.0 L1064.3 415.9 L1064.9 417.8 L1043.3 496.3 L1041.8 497.6 L1040.3 498.9 L1038.8 500.0 L1037.2 501.0 L1035.7 501.9 L1034.1 502.7 L1032.6 503.3 L1031.1 503.8 L1029.6 504.2 L1028.1 504.5 L1026.6 504.6 L1025.1 504.6 L1023.7 504.5 L1022.3 504.3 L1021.0 503.9 L914.7 474.6 L913.2 474.2 L911.8 473.7 L910.4 473.0 L909.1 472.2 L907.9 471.2 L906.6 470.1 L905.5 468.8 L904.4 467.5 L903.4 466.0 L902.4 464.4 L901.6 462.6 L900.8 460.8 L900.0 458.9 L899.4 456.8 L898.8 454.6 L898.3 452.4 L897.9 450.1 L897.6 447.7 L897.4 445.2 L897.2 442.7 Z" fill="url(#gM)" stroke="#0a0a0a" stroke-width="1.3" stroke-linejoin="round" stroke-linecap="round"/>
<path d="M941.2 383.7 L939.9 385.0 L938.6 386.4 L937.3 387.8 L936.0 389.4 L934.8 391.0 L933.6 392.6 L932.4 394.4 L931.3 396.2 L930.2 398.1 L929.1 400.0 L928.0 402.0 L927.0 404.0 L926.1 406.1 L925.1 408.2 L924.3 410.3 L923.4 412.5 L922.7 414.7 L921.9 417.0 L921.3 419.2 L920.6 421.5 L920.1 423.8 L919.5 426.1 L919.1 428.4 L918.7 430.7 L918.3 433.0 L918.0 435.3 L917.8 437.5 L917.6 439.8 L917.5 442.0 L917.4 444.2 L917.4 446.4 L917.5 448.5 L917.6 450.6 L917.8 452.7 L918.0 454.7 L918.3 456.7 L918.7 458.6 L919.1 460.4 L919.6 462.2 Z" fill="#a4a4a4" stroke="#0a0a0a" stroke-width="1.3" stroke-linejoin="round" stroke-linecap="round"/>
<path d="M941.2 383.7 L1028.6 407.8 L1007.0 486.3 L919.6 462.2 Z" fill="#696969" stroke="#0a0a0a" stroke-width="1.3" stroke-linejoin="round" stroke-linecap="round"/>
<path d="M1064.9 417.8 L1064.3 415.9 L1063.7 414.0 L1062.9 412.3 L1062.1 410.6 L1061.3 409.1 L1060.3 407.6 L1059.3 406.3 L1058.3 405.1 L1057.2 403.9 L1056.0 402.9 L1054.9 402.1 L1053.6 401.3 L1052.3 400.7 L1051.0 400.2 L1049.6 399.8 L1048.2 399.6 L1046.8 399.4 L1045.3 399.5 L1043.9 399.6 L1042.4 399.9 L1040.9 400.2 L1039.3 400.8 L1037.8 401.4 L1036.3 402.2 L1034.7 403.1 L1033.2 404.1 L1031.7 405.2 L1030.1 406.5 L1028.6 407.8 L1007.0 486.3 L1007.6 488.2 L1008.3 490.1 L1009.0 491.8 L1009.8 493.5 L1010.7 495.0 L1011.6 496.5 L1012.6 497.8 L1013.6 499.0 L1014.7 500.1 L1015.9 501.1 L1017.1 502.0 L1018.3 502.8 L1019.6 503.4 L1021.0 503.9 L1022.3 504.3 L1023.7 504.5 L1025.1 504.6 L1026.6 504.6 L1028.1 504.5 L1029.6 504.2 L1031.1 503.8 L1032.6 503.3 L1034.1 502.7 L1035.7 501.9 L1037.2 501.0 L1038.8 500.0 L1040.3 498.9 L1041.8 497.6 L1043.3 496.3 Z" fill="#9a9a9a" stroke="#0a0a0a" stroke-width="1.3" stroke-linejoin="round" stroke-linecap="round"/>
<ellipse cx="1036.0" cy="452.0" rx="9.5" ry="17.9" transform="rotate(15.4 1036.0 452.0)" fill="url(#gEH)" stroke="#0a0a0a" stroke-width="1.1"/>
<path d="M569.0 299.1 L566.5 298.6 L563.9 298.5 L561.3 298.8 L558.6 299.5 L556.1 300.7 L553.7 302.1 L551.4 304.0 L549.4 306.1 L547.6 308.5 L546.0 311.1 L544.8 313.9 L543.9 316.8 L543.4 319.8 L543.2 322.8 L543.3 325.8 L543.8 328.6 L544.7 331.3 L545.9 333.9 L547.4 336.1 L549.1 338.1 L551.2 339.7 L553.4 341.0 L555.8 341.9" fill="none" stroke="#d8cc2a" stroke-width="3.4"/>
<path d="M569.0 299.1 L566.5 298.6 L563.9 298.5 L561.3 298.8 L558.6 299.5 L556.1 300.7 L553.7 302.1 L551.4 304.0 L549.4 306.1 L547.6 308.5 L546.0 311.1 L544.8 313.9 L543.9 316.8 L543.4 319.8 L543.2 322.8 L543.3 325.8 L543.8 328.6 L544.7 331.3 L545.9 333.9 L547.4 336.1 L549.1 338.1 L551.2 339.7 L553.4 341.0 L555.8 341.9 L737.7 393.7 L740.2 394.2 L742.8 394.3 L745.4 394.0 L748.1 393.3 L750.6 392.1 L753.0 390.7 L755.3 388.8 L757.3 386.7 L759.1 384.3 L760.7 381.7 L761.9 378.9 L762.8 376.0 L763.3 373.0 L763.5 370.0 L763.4 367.0 L762.9 364.2 L762.0 361.5 L760.8 358.9 L759.3 356.7 L757.6 354.7 L755.5 353.1 L753.3 351.8 L750.9 350.9 Z" fill="#6a6a48" stroke="#0a0a0a" stroke-width="2" stroke-linejoin="round"/>
<path d="M571.0 309.0 L569.5 308.7 L567.9 308.6 L566.3 308.8 L564.8 309.2 L563.2 309.9 L561.8 310.8 L560.4 311.9 L559.2 313.2 L558.1 314.6 L557.2 316.2 L556.4 317.9 L555.9 319.6 L555.6 321.4 L555.4 323.2 L555.5 325.0 L555.9 326.7 L556.4 328.3 L557.1 329.8 L558.0 331.2 L559.1 332.4 L560.3 333.3 L561.6 334.1 L563.1 334.7 L745.0 386.5 L746.5 386.8 L748.0 386.8 L749.6 386.6 L751.2 386.2 L752.7 385.5 L754.2 384.6 L755.5 383.5 L756.7 382.3 L757.8 380.8 L758.8 379.3 L759.5 377.6 L760.0 375.8 L760.4 374.0 L760.5 372.2 L760.4 370.5 L760.1 368.7 L759.6 367.1 L758.8 365.6 L757.9 364.3 L756.9 363.1 L755.7 362.1 L754.3 361.3 L752.9 360.8 Z" fill="none" stroke="#d4ca2c" stroke-width="1.1"/>
<path d="M569.0 299.1 L571.0 309.0" stroke="#d8cc2a" stroke-width="1.2"/>
<path d="M555.8 341.9 L563.1 334.7" stroke="#d8cc2a" stroke-width="1.2"/>
<path d="M750.9 350.9 L752.9 360.8" stroke="#d8cc2a" stroke-width="1.2"/>
<path d="M737.7 393.7 L745.0 386.5" stroke="#d8cc2a" stroke-width="1.2"/>
<path d="M565.4 321.3 L741.3 371.5" stroke="#0a0a0a" stroke-width="1" stroke-dasharray="14 3 3 3"/>
<path d="M559.4 320.5 h6 M562.4 317.5 v6" stroke="#0a0a0a" stroke-width="1"/>
<path d="M741.3 372.3 h6 M744.3 369.3 v6" stroke="#0a0a0a" stroke-width="1"/>
<circle cx="569.0" cy="299.1" r="2.6" fill="#0a0a0a"/>
<circle cx="555.8" cy="341.9" r="2.6" fill="#0a0a0a"/>
<circle cx="750.9" cy="350.9" r="2.6" fill="#0a0a0a"/>
<circle cx="737.7" cy="393.7" r="2.6" fill="#0a0a0a"/>
<path d="M542.9 162.7 L619.4 183.6" stroke="#0a0a0a" stroke-width="1" fill="none"/>
<path d="M560.4 164.5 L544.5 219.6" stroke="#0a0a0a" stroke-width="1" fill="none"/>
<path d="M603.9 175.5 L569.9 299.0" stroke="#0a0a0a" stroke-width="1" fill="none"/>
<path d="M569.9 299.0 L562.6 320.3" stroke="#0a0a0a" stroke-width="1" fill="none"/>
<path d="M751.3 349.5 L744.5 372.0" stroke="#0a0a0a" stroke-width="1" fill="none"/>
<path d="M559.2 167.2 L549.9 166.9 L551.1 162.7 Z" fill="#0a0a0a"/>
<path d="M603.3 179.2 L612.6 179.5 L611.4 183.7 Z" fill="#0a0a0a"/>
<path d="M599.0 196.7 L780.7 246.7" stroke="#0a0a0a" stroke-width="1" fill="none"/>
<path d="M599.4 196.8 L608.7 197.1 L607.5 201.3 Z" fill="#0a0a0a"/>
<path d="M780.3 246.6 L771.0 246.3 L772.2 242.1 Z" fill="#0a0a0a"/>
<path d="M781.3 243.6 L751.3 349.5" stroke="#0a0a0a" stroke-width="1" fill="none"/>
<path d="M751.2 349.0 L799.3 363.5" stroke="#0a0a0a" stroke-width="1" fill="none"/>
<path d="M738.9 392.1 L786.7 406.2" stroke="#0a0a0a" stroke-width="1" fill="none"/>
<path d="M802.1 343.4 L779.0 424.4" stroke="#0a0a0a" stroke-width="1" fill="none"/>
<path d="M796.6 362.4 L797.0 353.2 L801.1 354.3 Z" fill="#0a0a0a"/>
<path d="M784.6 405.8 L784.2 415.0 L780.1 413.9 Z" fill="#0a0a0a"/>
<text x="584.5" y="171" font-size="18.5" textLength="9.3" lengthAdjust="spacingAndGlyphs" text-anchor="middle" transform="rotate(15.4 584.5 164.5)" font-family="Liberation Sans, sans-serif" font-style="italic" font-weight="bold" fill="#0a0a0a">6</text>
<text x="698.5" y="221" font-size="18.5" textLength="18.6" lengthAdjust="spacingAndGlyphs" text-anchor="middle" transform="rotate(15.4 698.5 214.5)" font-family="Liberation Sans, sans-serif" font-style="italic" font-weight="bold" fill="#0a0a0a">25</text>
<text x="783.5" y="385.5" font-size="18.5" textLength="9.3" lengthAdjust="spacingAndGlyphs" text-anchor="middle" transform="rotate(-74.6 783.5 379)" font-family="Liberation Sans, sans-serif" font-style="italic" font-weight="bold" fill="#0a0a0a">5</text>
<path d="M657.5 326 C 640 322, 628 350, 644 368 C 648 371, 652 370, 655 366" stroke="#0a0a0a" stroke-width="1" fill="none"/>
<rect x="648" y="326" width="12" height="12" fill="#0cc83a"/>
<rect x="648" y="354" width="12" height="12" fill="#0cc83a"/>
<path d="M660 326 L648 338 M650 360 h9 M660 354 L648 366" stroke="#0a0a0a" stroke-width="1"/>
<circle cx="654" cy="332" r="2.4" fill="none" stroke="#e8e8e8" stroke-width="1.2"/>
<text x="659.5" y="338.5" font-size="10.5" font-family="Liberation Sans, sans-serif" font-weight="bold" fill="#0a0a0a">0</text>
<path d="M649 346.5 h7 M650 343.5 l5 6 M655 343.5 l-5 6 M652.5 342.5 v8" stroke="#0a0a0a" stroke-width="0.9"/>
<circle cx="668" cy="350" r="5.4" fill="#868686" stroke="#dcdcdc" stroke-width="1"/>
<path d="M656 346.8 L668 350.2" stroke="#ececec" stroke-width="1.8" stroke-linecap="round"/>
<path d="M665 352.5 h6 v-3" stroke="#f2f2f2" stroke-width="1.1" fill="none"/>
<rect x="460" y="285" width="11" height="11" fill="#0cc83a"/>
<circle cx="465.5" cy="290.5" r="2.6" fill="none" stroke="#e8e8e8" stroke-width="1.1"/><path d="M461 290.5 h9 M465.5 286 v9" stroke="#e8e8e8" stroke-width="0.8"/>
<text x="471.5" y="297.5" font-size="11" textLength="5" lengthAdjust="spacingAndGlyphs" font-family="Liberation Sans, sans-serif" font-weight="bold" fill="#0a0a0a">0</text>
<path d="M414.3 250 L406.4 277.6 L416 280.2" stroke="#ff1a1a" stroke-width="1.2" fill="none"/>
<path d="M415.3 245.5 L417.6 255 L411.4 253.4 Z M420.3 281.4 L413.2 282.6 L414.6 277 Z" fill="#ff1a1a"/>
<path d="M358 594.5 L388 603" stroke="#1a1aa0" stroke-width="3"/>
<path d="M369 598 L386 602.8" stroke="#c01818" stroke-width="3.2"/>
<path d="M392.5 604.5 L383 606.5 L385 598 Z" fill="#d82020"/>
<path d="M369.5 598 L373.5 577" stroke="#189030" stroke-width="3.2"/>
<path d="M374.8 568.5 L378.2 579.5 L369.5 578 Z" fill="#148a2c"/>
<circle cx="356.5" cy="594" r="4.2" fill="#1414a8"/>
<text x="371.5" y="566.5" fill="#148a2c" font-family="Liberation Sans, sans-serif" font-size="11">Y</text>
<text x="346" y="596" fill="#1414e0" font-style="italic" font-family="Liberation Sans, sans-serif" font-size="11">Z</text>
<text x="390" y="609.5" fill="#e01818" font-family="Liberation Sans, sans-serif" font-size="11">X</text>
<!-- viewport frame -->
<rect x="327" y="655" width="775" height="18" fill="#f5f5f5"/>
<rect x="327" y="654.5" width="775" height="1" fill="#8a8a8a"/>
</svg>

<!-- top strip -->
<div class="abs" style="left:0;top:0;width:1102px;height:1px;background:#a6a6a6;"></div><div class="abs" style="left:0;top:1px;width:1102px;height:1px;background:#c6c6c6;"></div>
<div class="abs" style="left:32px;top:2px;width:295px;height:1px;background:#c4d8dc;"></div>

<!-- panel right border -->
<div class="abs" style="left:326px;top:2px;width:1px;height:297px;background:#8c8c8c;"></div><div class="abs" style="left:326px;top:336px;width:1px;height:319px;background:#8c8c8c;"></div>
<div class="abs" style="left:326px;top:298px;width:9px;height:39px;background:#f7f7f7;border:1px solid #8c8c8c;border-left:none;box-sizing:border-box;"></div>
<div class="abs" style="left:327px;top:314px;width:5px;height:5px;border-radius:50%;background:#d0d0d0;border:1px solid #9a9a9a;box-sizing:content-box;"></div>

<!-- grip + lines -->
<div class="abs" style="left:3px;top:4px;width:28px;height:2px;background:repeating-linear-gradient(90deg,#7c7c7c 0 2px,transparent 2px 4px);"></div>
<div class="hl" style="left:32px;top:6px;width:292px;background:#c4c4c4;"></div>
<div class="abs" style="left:175px;top:11px;width:5px;height:5px;border-radius:50%;background:#d4d4d4;border:1px solid #a0a0a0;"></div>
<div class="hl" style="left:32px;top:21px;width:292px;background:#c4c4c4;"></div>
<div class="hl" style="left:32px;top:51px;width:292px;background:#a0a0a0;"></div>

<!-- tabs -->
<div class="tab" style="left:33px;"></div>
<div class="tab" style="left:73px;background:#f7f7f7;height:26px;border-bottom:none;"></div>
<div class="tab" style="left:113px;"></div>
<div class="tab" style="left:153px;"></div>
<div class="tab" style="left:193px;"></div>

<!-- ICONS -->
<svg width="1102" height="673" viewBox="0 0 1102 673" style="z-index:5;pointer-events:none"><rect x="10.5" y="22.3" width="14.5" height="14.5" rx="1.5" fill="none" stroke="#c4c4c4" stroke-width="1.1"/><text x="11.7" y="35.5" font-family="Liberation Sans, sans-serif" font-size="14" fill="#c4c4c4">A</text><circle cx="21.8" cy="25.9" r="1.5" fill="none" stroke="#c4c4c4" stroke-width="0.9"/>
<path d="M10.3 17.5v8M6.3 21.5h8M7.5 18.7l5.6 5.6M13.1 18.7l-5.6 5.6" stroke="#c4c4c4" stroke-width="0.7"/>
<rect x="7.0" y="45.3" width="14.5" height="14.5" rx="1.5" fill="none" stroke="#c4c4c4" stroke-width="1.1"/><text x="8.2" y="58.5" font-family="Liberation Sans, sans-serif" font-size="14" fill="#c4c4c4">A</text><circle cx="18.3" cy="48.9" r="1.5" fill="none" stroke="#c4c4c4" stroke-width="0.9"/>
<path d="M13 60.5 l1.2-4 8-8.5 3 2.8-8 8.6z" fill="#d6d6d6" stroke="#c4c4c4" stroke-width="1"/>
<rect x="7.0" y="71.5" width="14.5" height="14.5" rx="1.5" fill="none" stroke="#c4c4c4" stroke-width="1.1"/><text x="8.2" y="84.7" font-family="Liberation Sans, sans-serif" font-size="14" fill="#c4c4c4">A</text><circle cx="18.3" cy="75.1" r="1.5" fill="none" stroke="#c4c4c4" stroke-width="0.9"/>
<path d="M17 81 l5 5 M24.5 88.5 h-6.2 l6.2-6.2z" stroke="#c4c4c4" stroke-width="2.4" fill="#c4c4c4"/>
<rect x="7.0" y="97.6" width="14.5" height="14.5" rx="1.5" fill="none" stroke="#c4c4c4" stroke-width="1.1"/><text x="8.2" y="110.8" font-family="Liberation Sans, sans-serif" font-size="14" fill="#c4c4c4">A</text><circle cx="18.3" cy="101.2" r="1.5" fill="none" stroke="#c4c4c4" stroke-width="0.9"/>
<path d="M20.5 102.5v9M16 107h9M16 113h9" stroke="#c4c4c4" stroke-width="2.4"/>
<rect x="7.0" y="123.2" width="14.5" height="14.5" rx="1.5" fill="none" stroke="#c4c4c4" stroke-width="1.1"/><text x="8.2" y="136.4" font-family="Liberation Sans, sans-serif" font-size="14" fill="#c4c4c4">A</text><circle cx="18.3" cy="126.8" r="1.5" fill="none" stroke="#c4c4c4" stroke-width="0.9"/>
<rect x="18.5" y="128" width="6.2" height="12.5" rx="3" fill="#c4c4c4"/><circle cx="21.6" cy="131.5" r="1.4" fill="#e6e6e6"/><circle cx="21.6" cy="137" r="1.4" fill="#e6e6e6"/>
<rect x="7.0" y="149.2" width="14.5" height="14.5" rx="1.5" fill="none" stroke="#c4c4c4" stroke-width="1.1"/><text x="8.2" y="162.4" font-family="Liberation Sans, sans-serif" font-size="14" fill="#c4c4c4">A</text><circle cx="18.3" cy="152.8" r="1.5" fill="none" stroke="#c4c4c4" stroke-width="0.9"/>
<path d="M12.5 155.5h3v-4h6v4h3v11h-12z" fill="#dcdcdc" stroke="#c4c4c4" stroke-width="1"/><rect x="15" y="161.5" width="7" height="4" fill="none" stroke="#c4c4c4" stroke-width="0.9"/><path d="M15.5 156.5h6M15.5 158.5h6" stroke="#c4c4c4" stroke-width="0.8"/>
<rect x="8.5" y="176.8" width="14.5" height="14.5" rx="1.5" fill="none" stroke="#c4c4c4" stroke-width="1.1" stroke-dasharray="2 1.4"/><text x="9.7" y="190.0" font-family="Liberation Sans, sans-serif" font-size="14" fill="#c4c4c4">A</text><circle cx="19.8" cy="180.4" r="1.5" fill="none" stroke="#c4c4c4" stroke-width="0.9"/>
<path d="M7 175.3l2 2M24.5 175.3l-2 2M7 192.8l2-2M24.5 192.8l-2-2M12 175v1.6M16 175v1.6M20 175v1.6M12 191.5v1.6M16 191.5v1.6M20 191.5v1.6" stroke="#c4c4c4" stroke-width="0.9"/>
<g stroke="#c4c4c4" fill="none" stroke-width="1.1"><circle cx="11" cy="214" r="4.2"/><circle cx="11" cy="214" r="1.2"/><circle cx="21" cy="204.5" r="3.2"/><circle cx="21" cy="204.5" r="0.9"/><path d="M7.8 211.2 L18.6 202.3 M14.2 217 L23.6 206.6"/><path d="M8 207.5 l5-5 m0 3.4 v-3.4 h-3.4 M24.5 212.5 l-5 5 m0-3.4 v3.4 h3.4"/></g>
<g stroke-linejoin="round"><path d="M46.3 35.4 L47.9 34.7 L49.7 35.3 L49.7 31.9 L54.1 30.3 L58.7 31.8 L58.7 36.6 L62.9 38.1 L62.9 44.3 L57.7 47.6 L46.3 39.4 Z" fill="none" stroke="#ffffff" stroke-width="3" opacity="0.75"/><path d="M46.3 35.4 L49.7 36.2 L49.7 31.9 L53.8 33.4 L53.8 37.8 L57.7 40.1 L57.7 47.6 L46.3 39.4 Z" fill="#f5c614"/><path d="M46.3 35.4 L47.9 34.7 L49.7 35.3 L49.7 36.2 Z" fill="#fbe36a"/><path d="M49.7 31.9 L54.1 30.3 L58.7 31.8 L53.8 33.4 Z" fill="#fbe570"/><path d="M53.8 33.4 L58.7 31.8 L58.7 36.8 L53.8 37.8 Z" fill="#f9da4c"/><path d="M53.8 37.8 L58.7 36.6 L62.9 38.1 L57.7 40.1 Z" fill="#fce988"/><path d="M57.7 40.1 L62.9 38.1 L62.9 44.3 L57.7 47.6 Z" fill="#f8d848"/><path d="M46.3 35.4 L47.9 34.7 L49.7 35.3 L49.7 31.9 L54.1 30.3 L58.7 31.8 L58.7 36.6 L62.9 38.1 L62.9 44.3 L57.7 47.6 L46.3 39.4 Z M49.7 31.9 L53.8 33.4 L58.7 31.8 M53.8 33.4 L53.8 37.8 L57.7 40.1 L62.9 38.1 M57.7 40.1 L57.7 47.6 M53.8 37.8 L58.7 36.6 M46.3 35.4 L49.7 36.2 L49.7 35.3" fill="none" stroke="#8a5a08" stroke-width="0.9"/></g>
<rect x="85.8" y="30.7" width="16.4" height="16.4" rx="1.6" fill="#fbfbfb" stroke="#14304c" stroke-width="1.3"/><path d="M86.4 31.4h15.2v2.9h-15.2z" fill="#7ec0e4"/><path d="M85.8 34.3h16.4" stroke="#14304c" stroke-width="1"/><rect x="87.3" y="35.4" width="4.2" height="2.3" fill="#15456e"/><rect x="87.3" y="39.5" width="4.2" height="2.3" fill="#15456e"/><rect x="87.3" y="43.5" width="4.2" height="2.3" fill="#15456e"/><path d="M88.3 36.55h2.2M88.3 40.65h2.2M88.3 44.65h2.2" stroke="#6ab0d8" stroke-width="0.8"/><path d="M93.3 36.55h7.5M93.3 40.65h7.5M93.3 44.65h7.5" stroke="#333" stroke-width="1.2"/>
<g fill="#fdfdfd" stroke="#2c2c2c" stroke-width="1.2"><rect x="127.6" y="30.6" width="2.2" height="16.6" fill="#f4f4f4"/><path d="M129.8 34.8h3.7M129.8 43.9h5.7" fill="none"/><path d="M132.6 32.2v-1.4h4.6v1.4 M134.6 41.5v-1.4h4.6v1.4" fill="none" stroke-width="1"/><rect x="133.6" y="32.3" width="5" height="5"/><rect x="135.6" y="41.6" width="5" height="5"/></g>
<g stroke="#111" stroke-width="1.8" fill="none"><circle cx="174" cy="38.8" r="5.6"/><path d="M174 30v17.6M165.2 38.8h17.6"/></g>
<defs><clipPath id="ballc"><circle cx="214" cy="37.8" r="8.9"/></clipPath><radialGradient id="ballg" cx="0.38" cy="0.3" r="0.75"><stop offset="0" stop-color="#fff" stop-opacity="0.5"/><stop offset="0.45" stop-color="#fff" stop-opacity="0.05"/><stop offset="1" stop-color="#000" stop-opacity="0.3"/></radialGradient></defs><g clip-path="url(#ballc)"><rect x="204" y="28" width="20" height="20" fill="#2a6fd0"/><path d="M210.3 38.5 L213 28 L224 28 L224 38 Z" fill="#d42020"/><path d="M210.3 38.5 L224 37.6 L224 48 L209.6 48 Z" fill="#f0c010"/><path d="M210.3 38.5 L209.6 48 L204 48 L204 38.6 Z" fill="#2aa82a"/><path d="M210.3 38.5 L213.2 28.5" stroke="#fff" stroke-width="1.1" opacity="0.75"/><ellipse cx="218.3" cy="34" rx="1.9" ry="4.3" transform="rotate(-30 218.3 34)" fill="#151515"/></g><circle cx="214" cy="37.8" r="8.9" fill="url(#ballg)"/>
<g stroke="#444" stroke-width="0.9" stroke-linejoin="round"><path d="M44.2 62.2 L47.1 61.8 L47.8 76 L44.5 74.2Z" fill="#c8c8c8"/><path d="M44.2 62.2 L55.5 59.4 L58.7 60.5 L47.1 61.8Z" fill="#e4e4e4"/><path d="M47.1 61.8 L58.7 60.5 L58.7 73 L47.8 76Z" fill="#f4f4f4"/></g><defs><linearGradient id="ceg" x1="0" y1="0" x2="0" y2="1"><stop offset="0" stop-color="#2a78ae"/><stop offset="0.55" stop-color="#3c8cc0"/><stop offset="0.6" stop-color="#8ccdf0"/><stop offset="1" stop-color="#9ad4f2"/></linearGradient></defs><path d="M49 64.2 L57 63.6 L57 71.6 L49.3 73Z" fill="url(#ceg)" stroke="#1c4a6e" stroke-width="1"/><path d="M50 65.4 L53.6 65.2 L53.6 68.8 L50.1 69.2Z" fill="#fdfdfd"/>
<path d="M40.4 95.4 L44.8 100 L53.4 90" fill="none" stroke="#2e9a10" stroke-width="2.6"/>
<path d="M69.4 90.6 L79.6 100.4 M79.6 90.6 L69.4 100.4" stroke="#dd2200" stroke-width="2.2"/>
<path d="M92.2 95 Q100.8 86 109.8 95.4 Q101 104.4 92.2 95Z" fill="#fff" stroke="#6c6c6c" stroke-width="1"/><circle cx="101.8" cy="94.3" r="4.5" fill="#111"/><circle cx="101.9" cy="92.6" r="0.9" fill="#fff"/>
<circle cx="305.1" cy="67.8" r="6.8" fill="#f2f2f2" stroke="#303030" stroke-width="1.3"/><text x="305.1" y="71.9" text-anchor="middle" font-family="Liberation Sans, sans-serif" font-weight="bold" font-size="11.5" fill="#1d5c9c">?</text>
<path d="M307 132.8 L311.2 127.8 L315.4 132.8" fill="none" stroke="#555" stroke-width="1.9"/>
<path d="M307 191.6 L311.2 186.6 L315.4 191.6" fill="none" stroke="#555" stroke-width="1.9"/>
<path d="M307 398.8 L311.2 403.8 L315.4 398.8" fill="none" stroke="#555" stroke-width="1.9"/>
<path d="M307 430.6 L311.2 435.6 L315.4 430.6" fill="none" stroke="#555" stroke-width="1.9"/>
<path d="M298.6 153.0 L302.2 157.0 L305.8 153.0" fill="none" stroke="#3c3c3c" stroke-width="1.2"/>
<path d="M298.6 214.0 L302.2 218.0 L305.8 214.0" fill="none" stroke="#3c3c3c" stroke-width="1.2"/>
<path d="M46.2 215.8 L53.6 208.4" stroke="#151515" stroke-width="2"/><path d="M56.2 205.8 L56 212 L50 206Z" fill="#151515"/>
<path d="M59.8 213.6 L52.6 220.8" stroke="#d4d4d4" stroke-width="2"/><path d="M50 223.4 L50.2 217.2 L56.2 223.2Z" fill="#d4d4d4"/>
<path d="M48 247 L55.4 239.6" stroke="#2a7194" stroke-width="2"/><path d="M58.2 237 L58 243.6 L51.6 237.2Z" fill="#2a7194"/>
<path d="M53 277.4 L61.4 285 M44.4 287.2 L52 294.6" stroke="#2c6c9c" stroke-width="1.8"/><path d="M44.4 287.2 L47.4 284.6" stroke="#2c6c9c" stroke-width="1.8"/><path d="M47.8 284.2 L52.6 280.6" stroke="#111" stroke-width="1.8"/><path d="M45.8 285.8 L50 285.2 L47.6 282Z M54.6 279 L50.4 279.8 L52.8 283Z" fill="#111"/><text x="53" y="293.4" font-family="Liberation Sans, sans-serif" font-size="8.2" font-weight="bold" fill="#111" textLength="9" lengthAdjust="spacingAndGlyphs">D1</text>
<path d="M298 283.4 h5.6 l-2.8-3z M298 289.6 h5.6 l-2.8 3z" fill="#111"/>
<path d="M298 339.4 h5.6 l-2.8-3z M298 345.6 h5.6 l-2.8 3z" fill="#111"/>
<g stroke="#123250" stroke-width="1" stroke-linejoin="round"><path d="M44.2 336.7 L54.8 334.4 L61.3 341.3 L55.3 342.7Z" fill="#92d6f2"/><path d="M44.2 336.7 L55.3 342.7 L55.3 349.5 L44.2 347.6Z" fill="#4a98c4"/><path d="M55.3 342.7 L61.3 341.3 L61.3 347.9 L55.3 349.5Z" fill="#f6f6f6"/></g>
<rect x="35" y="656.5" width="15" height="13" fill="none" stroke="#8e8e8e" stroke-width="1"/><rect x="50" y="656.5" width="15" height="13" fill="none" stroke="#8e8e8e" stroke-width="1"/><rect x="66" y="656.5" width="15" height="13" fill="none" stroke="#8e8e8e" stroke-width="1"/><rect x="81" y="656.5" width="15" height="13" fill="none" stroke="#8e8e8e" stroke-width="1"/><path d="M38.5 658.5v9M46.5 658.5l-6 4.5 6 4.5z M60 658.5l-6 4.5 6 4.5z M71 658.5l6 4.5-6 4.5z M85 658.5l6 4.5-6 4.5z M93 658.5v9" fill="#8c8c8c" stroke="#8c8c8c" stroke-width="1"/>
<path d="M333.2 12.8 L338 16.6 L333.2 20.4Z" fill="#1a1a1a"/>
<g transform="translate(304.2 -22.2)"><g stroke-linejoin="round"><path d="M46.3 35.4 L47.9 34.7 L49.7 35.3 L49.7 31.9 L54.1 30.3 L58.7 31.8 L58.7 36.6 L62.9 38.1 L62.9 44.3 L57.7 47.6 L46.3 39.4 Z" fill="none" stroke="#ffffff" stroke-width="3" opacity="0.75"/><path d="M46.3 35.4 L49.7 36.2 L49.7 31.9 L53.8 33.4 L53.8 37.8 L57.7 40.1 L57.7 47.6 L46.3 39.4 Z" fill="#f5c614"/><path d="M46.3 35.4 L47.9 34.7 L49.7 35.3 L49.7 36.2 Z" fill="#fbe36a"/><path d="M49.7 31.9 L54.1 30.3 L58.7 31.8 L53.8 33.4 Z" fill="#fbe570"/><path d="M53.8 33.4 L58.7 31.8 L58.7 36.8 L53.8 37.8 Z" fill="#f9da4c"/><path d="M53.8 37.8 L58.7 36.6 L62.9 38.1 L57.7 40.1 Z" fill="#fce988"/><path d="M57.7 40.1 L62.9 38.1 L62.9 44.3 L57.7 47.6 Z" fill="#f8d848"/><path d="M46.3 35.4 L47.9 34.7 L49.7 35.3 L49.7 31.9 L54.1 30.3 L58.7 31.8 L58.7 36.6 L62.9 38.1 L62.9 44.3 L57.7 47.6 L46.3 39.4 Z M49.7 31.9 L53.8 33.4 L58.7 31.8 M53.8 33.4 L53.8 37.8 L57.7 40.1 L62.9 38.1 M57.7 40.1 L57.7 47.6 M53.8 37.8 L58.7 36.6 M46.3 35.4 L49.7 36.2 L49.7 35.3" fill="none" stroke="#8a5a08" stroke-width="0.9"/></g></g>
<path d="M794.4 18.8 L788.4 24.4" stroke="#4a86b4" stroke-width="4" stroke-linecap="round"/><path d="M794.4 18.8 L788.4 24.4" stroke="#86bde0" stroke-width="2.4" stroke-linecap="round"/><circle cx="798.5" cy="14.2" r="6" fill="#ececec" stroke="#8c8c8c" stroke-width="1.2"/><path d="M798.5 10.2l1.5 1.6h-3z M798.5 18.2l1.5-1.6h-3z M794.5 14.2l1.6-1.5v3z M802.5 14.2l-1.6-1.5v3z" fill="#333"/>
<rect x="819" y="8.6" width="11.6" height="11.6" fill="none" stroke="#444" stroke-width="1" stroke-dasharray="2.4 1.6"/><path d="M818.8 20.6 L813.6 25.2" stroke="#4a86b4" stroke-width="4" stroke-linecap="round"/><path d="M818.8 20.6 L813.6 25.2" stroke="#86bde0" stroke-width="2.4" stroke-linecap="round"/><circle cx="822.6" cy="16.2" r="5.8" fill="#e6e9ec" stroke="#8c8c8c" stroke-width="1.2"/>
<g transform="rotate(-40 848 17)"><rect x="840" y="13.4" width="9" height="7.6" rx="1.5" fill="#c8c8c8" stroke="#6e6e6e" stroke-width="1"/><rect x="849" y="14.6" width="5.6" height="5.2" fill="#b4b4b4" stroke="#6e6e6e" stroke-width="1"/><rect x="854.6" y="15.4" width="4.6" height="3.6" fill="#d0d0d0" stroke="#6e6e6e" stroke-width="0.9"/><ellipse cx="840.6" cy="17.2" rx="1.4" ry="3.2" fill="#f0f0f0" stroke="#6e6e6e" stroke-width="0.8"/></g><path d="M847.8 20.8 L852 17.6 L852 19.6 L857 19.6 L857 22 L852 22 L852 24Z" fill="#3f86b8"/>
<g fill="#e4e4e4" stroke="#d0d0d0" stroke-width="1"><path d="M865.5 14.5 L865.5 23.5 Q869 26 872.5 24.5 L872.5 15.5 Q869 16.6 865.5 14.5Z"/><path d="M876 15.5 L876 24 Q880 23.5 882.6 21 L882.6 12.5 Q880 15 876 15.5Z"/><path d="M865.5 14.5 Q868 10 874 9.6 Q880 9.6 882.6 12.5 Q880 15 876 15.5 L876 13 Q874 12 872.5 13.4 L872.5 15.5 Q869 16.6 865.5 14.5Z" fill="#ededed"/></g>
<path d="M891.6 13.2 L896.4 8.6 L908.6 8.6 L908.6 20.8 L904.2 25.4" fill="#fafafa" stroke="#3c3c3c" stroke-width="1"/><path d="M904.2 13.2 L908.6 8.6 M900 8.8v4 M904.4 17.2h4" stroke="#3c3c3c" stroke-width="0.9" fill="none"/><rect x="891.6" y="13.2" width="12.6" height="12.2" fill="#7db8dc" stroke="#24506e" stroke-width="1.1"/><path d="M898.6 10.2l1.4 1.6 1.4-1.6z M907 16l-1.6 1.3 1.6 1.3z" fill="#222"/>
<path d="M917.0 16.2 h5 l-2.5 2.8z" fill="#9a9a9a"/>
<g stroke="#4a4a4a" stroke-width="1.1" stroke-linejoin="round"><path d="M932.4 10.6 L941 8 L948.6 10.2 L940.4 13.4Z" fill="#cfe6f4"/><path d="M932.4 10.6 L940.4 13.4 L940.4 25.6 L932.4 21.6Z" fill="#6db2da"/><path d="M940.4 13.4 L948.6 10.2 L948.6 21.4 L940.4 25.6Z" fill="#f4f4f4"/></g><path d="M940.9 13.6 L944 12.4 L944 23.4 L940.9 25Z" fill="#a8d2ea"/>
<path d="M957.0 16.2 h5 l-2.5 2.8z" fill="#9a9a9a"/>
<path d="M971 17.4 Q980 8 989.2 17.4 Q980 26 971 17.4Z" fill="#e4e4e4" stroke="#8a8a8a" stroke-width="1.1"/><circle cx="980.2" cy="17" r="4.4" fill="#6a6a6a"/><circle cx="980.2" cy="17" r="2" fill="#3a3a3a"/><path d="M980.3 9.6V25" stroke="#333" stroke-width="1"/>
<path d="M997.0 16.2 h5 l-2.5 2.8z" fill="#9a9a9a"/>
<circle cx="1018.4" cy="14.6" r="7.6" fill="#e6e6e6" stroke="#dadada" stroke-width="0.8"/><path d="M1011 15.5 Q1018 18.5 1026 15" stroke="#f4f4f4" stroke-width="1" fill="none"/><path d="M1017.5 26.4 l1.4-4.6 8.2-8.2 3.2 3.2-8.2 8.2z" fill="#e0e0e0" stroke="#cfcfcf" stroke-width="0.9"/>
<rect x="1036.2" y="15" width="18.6" height="11.4" fill="#dedede"/><path d="M1039 21.5h4v2.4h-4z M1047.5 21.5h4v2.4h-4z M1043 23.9h4.5v2.5h-4.5z M1036.2 23.9h2.8v2.5h-2.8z M1051.5 23.9h3.3v2.5h-3.3z" fill="#f6f6f6"/><circle cx="1045.4" cy="14.4" r="7.6" fill="#e6e6e6" stroke="#dadada" stroke-width="0.8"/>
<path d="M1063.0 16.2 h5 l-2.5 2.8z" fill="#9a9a9a"/>
<defs><radialGradient id="vsg" cx="0.4" cy="0.35" r="0.7"><stop offset="0" stop-color="#f8f8f8"/><stop offset="1" stop-color="#dcdcdc"/></radialGradient></defs><ellipse cx="1086.5" cy="23.6" rx="6" ry="1.2" fill="#ececec"/><circle cx="1086.5" cy="15.4" r="7.5" fill="url(#vsg)" stroke="#dcdcdc" stroke-width="0.8"/></svg>

<!-- title -->
<div class="t b" id="t_title" style="transform-origin:0 0;transform:scaleX(0.8946);left:66px;top:62px;font-size:13px;">Cut-Extrude3</div>

<div class="hl" style="left:37px;top:116px;width:282px;"></div>
<div class="t sec" id="t_from" style="transform-origin:0 0;transform:scaleX(0.9000);left:41px;top:124px;">From</div>
<div class="dd" style="top:144px;"></div>
<div class="t" id="t_sketch" style="transform-origin:0 0;transform:scaleX(0.9194);left:75px;top:148px;">Sketch Plane</div>

<div class="hl" style="left:37px;top:175px;width:282px;"></div>
<div class="t sec" id="t_dir1" style="transform-origin:0 0;transform:scaleX(0.8871);left:41px;top:183px;">Direction 1</div>
<div class="abs" style="left:41px;top:203px;width:22px;height:22px;border:1px solid #8a8a8a;background:#fbfbfb;"></div>
<div class="dd" style="top:205px;"></div>
<div class="t" id="t_blind" style="transform-origin:0 0;transform:scaleX(0.9738);left:75px;top:209px;">Blind</div>

<div class="abs" style="left:85px;top:230px;width:224px;height:34px;border:1px solid #8c98b8;background:#fff;"></div>
<div class="abs" style="left:71px;top:230px;width:13px;height:35px;background:#4da3ff;"></div>

<div class="inp" style="top:276px;"></div>
<div class="t" id="t_mm" style="transform-origin:0 0;transform:scaleX(0.8756);left:74px;top:279px;">1.00mm</div>
<div class="spin" style="top:278px;"></div><div class="spin" style="top:286.5px;"></div>

<div class="cb" style="left:71px;top:307px;"></div>
<div class="t" id="t_flip" style="transform-origin:0 0;transform:scaleX(0.9690);left:88px;top:307px;">Flip side to cut</div>

<div class="abs" style="left:41px;top:330px;width:22px;height:22px;border:1px solid #6e6e6e;background:#b2b2b2;"></div>
<div class="inp" style="top:332px;"></div>
<div class="t" id="t_deg" style="transform-origin:0 0;transform:scaleX(0.9189);left:74px;top:335px;">45.00deg</div>
<div class="spin" style="top:334px;"></div><div class="spin" style="top:342.5px;"></div>

<div class="cb" style="left:71px;top:362px;"></div>
<div class="t" id="t_draft" style="transform-origin:0 0;transform:scaleX(0.9996);left:88px;top:362px;">Draft outward</div>

<div class="hl" style="left:37px;top:387px;width:282px;"></div>
<div class="cb" style="left:41px;top:395px;"></div>
<div class="t sec" id="t_dir2" style="transform-origin:0 0;transform:scaleX(0.9032);left:61px;top:395px;">Direction 2</div>
<div class="hl" style="left:37px;top:419px;width:282px;"></div>
<div class="t sec" id="t_sel" style="transform-origin:0 0;transform:scaleX(0.8868);left:41px;top:427px;">Selected Contours</div>

<!-- left toolbar separator -->
<div class="hl" style="left:0;top:230px;width:30px;background:#8c8c8c;"></div>

<!-- bottom tabs -->
<div class="hl" style="left:32px;top:652px;width:292px;background:#d0d0d0;"></div>
<div class="abs" style="left:33px;top:655px;width:66px;height:15px;background:#a4a4a4;border-top:1px solid #707070;box-sizing:border-box;"></div>
<div class="abs" style="left:99px;top:655px;width:57px;height:15px;background:#f7f7f7;"></div>
<div class="abs" style="left:156px;top:655px;width:67px;height:15px;background:#cccccc;border:1px solid #9c9c9c;border-top:none;box-sizing:border-box;"></div>
<div class="abs" style="left:223px;top:655px;width:109px;height:15px;background:#cccccc;border:1px solid #9c9c9c;border-top:none;border-left:none;box-sizing:border-box;"></div>
<div class="t b" id="t_model" style="transform-origin:0 0;transform:scaleX(1.0086);left:111px;top:655px;font-size:12px;">Model</div>
<div class="t" id="t_3d" style="transform-origin:0 0;transform:scaleX(0.9307);left:166px;top:655px;">3D Views</div>
<div class="t" id="t_motion" style="transform-origin:0 0;transform:scaleX(0.9994);left:233px;top:655px;">Motion Study 1</div>

<!-- viewport header -->
<div class="t" id="t_sw" style="transform-origin:0 0;transform:scaleX(1.0014);left:372px;top:10.5px;">SolidWorks Modeling &amp; D...</div>

</body>
</html>
